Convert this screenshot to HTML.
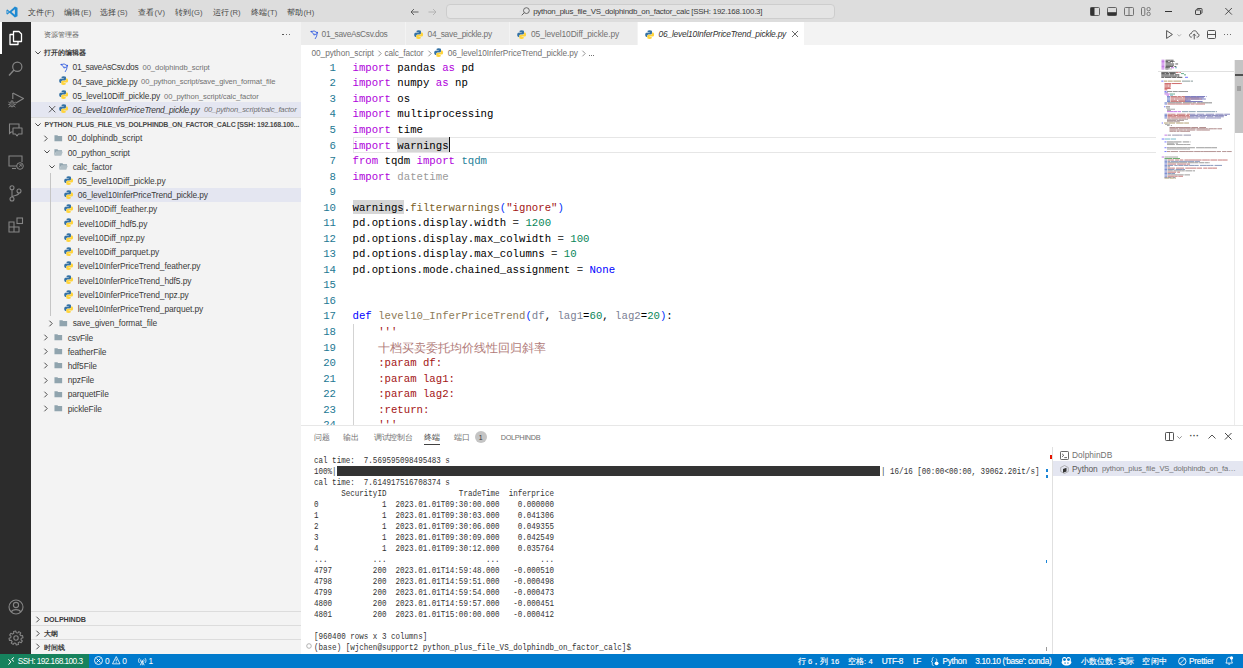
<!DOCTYPE html><html><head><meta charset="utf-8"><style>
*{box-sizing:border-box;margin:0;padding:0}
html,body{width:1243px;height:668px;overflow:hidden;background:#fff;font-family:"Liberation Sans",sans-serif;position:relative}
.a{position:absolute}
.t{position:absolute;white-space:pre;line-height:1}
.ui{font-size:8.4px;color:#333;letter-spacing:-0.1px}
.mono{font-family:"Liberation Mono",monospace}
svg{position:absolute;overflow:visible}
</style></head><body>
<div class="a" style="left:0px;top:0px;width:1243px;height:22px;background:#dddddd;"></div>
<div class="a" style="left:0px;top:22px;width:31px;height:632px;background:#2c2c2c;"></div>
<div class="a" style="left:31px;top:22px;width:270px;height:632px;background:#f3f3f3;"></div>
<div class="a" style="left:301px;top:22px;width:942px;height:23px;background:#f3f3f3;"></div>
<div class="a" style="left:301px;top:45px;width:942px;height:380px;background:#ffffff;"></div>
<div class="a" style="left:301px;top:425px;width:942px;height:229px;background:#ffffff;border-top:1px solid #e7e7e7"></div>
<div class="a" style="left:0px;top:654px;width:1243px;height:14px;background:#007acc;"></div>
<div class="a" style="left:0px;top:654px;width:89px;height:14px;background:#16825d;"></div>
<svg style="left:5.5px;top:5.5px" width="12" height="12" viewBox="0 0 100 100"><path d="M74 4 L96 14 V86 L74 96 L30 56 L12 70 L4 66 V34 L12 30 L30 44 Z M74 28 L46 50 L74 72 Z M12 40 V60 L22 50 Z" fill="#1f8ad2" fill-rule="evenodd"/></svg>
<div class="t" style="left:27.7px;top:7.6px;font-size:8.4px;height:9px;color:#3b3b3b">文件<span style="font-size:7.6px;letter-spacing:0.1px;margin-left:0.8px;color:#555">(F)</span></div>
<div class="t" style="left:64.2px;top:7.6px;font-size:8.4px;height:9px;color:#3b3b3b">编辑<span style="font-size:7.6px;letter-spacing:0.1px;margin-left:0.8px;color:#555">(E)</span></div>
<div class="t" style="left:100.4px;top:7.6px;font-size:8.4px;height:9px;color:#3b3b3b">选择<span style="font-size:7.6px;letter-spacing:0.1px;margin-left:0.8px;color:#555">(S)</span></div>
<div class="t" style="left:137.8px;top:7.6px;font-size:8.4px;height:9px;color:#3b3b3b">查看<span style="font-size:7.6px;letter-spacing:0.1px;margin-left:0.8px;color:#555">(V)</span></div>
<div class="t" style="left:174.5px;top:7.6px;font-size:8.4px;height:9px;color:#3b3b3b">转到<span style="font-size:7.6px;letter-spacing:0.1px;margin-left:0.8px;color:#555">(G)</span></div>
<div class="t" style="left:213.1px;top:7.6px;font-size:8.4px;height:9px;color:#3b3b3b">运行<span style="font-size:7.6px;letter-spacing:0.1px;margin-left:0.8px;color:#555">(R)</span></div>
<div class="t" style="left:250.5px;top:7.6px;font-size:8.4px;height:9px;color:#3b3b3b">终端<span style="font-size:7.6px;letter-spacing:0.1px;margin-left:0.8px;color:#555">(T)</span></div>
<div class="t" style="left:286.7px;top:7.6px;font-size:8.4px;height:9px;color:#3b3b3b">帮助<span style="font-size:7.6px;letter-spacing:0.1px;margin-left:0.8px;color:#555">(H)</span></div>
<svg style="left:410px;top:7.5px" width="9" height="8" viewBox="0 0 9 8"><path d="M8.5 4H1 M4 1 L1 4 L4 7" stroke="#555" stroke-width="0.9" fill="none"/></svg>
<svg style="left:428px;top:7.5px" width="9" height="8" viewBox="0 0 9 8"><path d="M0.5 4H8 M5 1 L8 4 L5 7" stroke="#b0b0b0" stroke-width="0.9" fill="none"/></svg>
<div class="a" style="left:445.5px;top:3.7px;width:389.5px;height:15.5px;background:#e4e4e4;border:1px solid #cdcdcd;border-radius:4px"></div>
<svg style="left:521px;top:7px" width="9" height="9" viewBox="0 0 9 9"><circle cx="5.4" cy="3.6" r="2.9" stroke="#555" stroke-width="0.85" fill="none"/><path d="M3.3 5.7 L0.7 8.3" stroke="#555" stroke-width="0.9"/></svg>
<div class="t" style="left:533.2px;top:8.25px;font-size:7.9px;height:7.9px;color:#3b3b3b;letter-spacing:-0.229px;">python_plus_file_VS_dolphindb_on_factor_calc [SSH: 192.168.100.3]</div>
<svg style="left:1090px;top:7px" width="10" height="9" viewBox="0 0 10 9"><rect x="0.5" y="0.5" width="9" height="8" rx="1" stroke="#555" stroke-width="0.9" fill="none"/><rect x="0.5" y="0.5" width="4" height="8" fill="#333"/></svg>
<svg style="left:1107px;top:7px" width="10" height="9" viewBox="0 0 10 9"><rect x="0.5" y="0.5" width="9" height="8" rx="1" stroke="#555" stroke-width="0.9" fill="none"/><rect x="0.5" y="5.2" width="9" height="3.3" fill="#333"/></svg>
<svg style="left:1124px;top:7px" width="10" height="9" viewBox="0 0 10 9"><rect x="0.5" y="0.5" width="9" height="8" rx="1" stroke="#666" stroke-width="0.9" fill="none"/><path d="M5 0.5V8.5" stroke="#666" stroke-width="0.9"/></svg>
<svg style="left:1141px;top:7px" width="10" height="9" viewBox="0 0 10 9"><rect x="0.5" y="0.5" width="3.3" height="8" rx="1" stroke="#666" stroke-width="0.9" fill="none"/><rect x="6" y="0.5" width="3.2" height="3.2" rx="1.3" stroke="#666" stroke-width="0.8" fill="none"/><rect x="6" y="5.3" width="3.2" height="3.2" rx="1.3" stroke="#666" stroke-width="0.8" fill="none"/></svg>
<div class="a" style="left:1165px;top:11px;width:7px;height:0.9px;background:#333;"></div>
<svg style="left:1194.7px;top:7.9px" width="7.5" height="7" viewBox="0 0 7.5 7"><rect x="0.5" y="2" width="5" height="4.5" rx="0.6" stroke="#333" stroke-width="0.9" fill="none"/><path d="M2 2 V1.2 Q2 0.5 2.7 0.5 H6.3 Q7 0.5 7 1.2 V4.6 Q7 5.3 6.3 5.3 H5.5" stroke="#333" stroke-width="0.9" fill="none"/></svg>
<svg style="left:1224.6px;top:7.9px" width="7.2" height="6.6" viewBox="0 0 7 7"><path d="M0 0L7 7M7 0L0 7" stroke="#333" stroke-width="0.9"/></svg>
<div class="a" style="left:0px;top:22px;width:2px;height:32px;background:#ffffff;"></div>
<svg style="left:8px;top:30px" width="15" height="16" viewBox="0 0 15 16"><path d="M5.5 1.5 H11 L13.5 4 V11.5 H5.5 Z" stroke="#fff" stroke-width="1.3" fill="none" stroke-linejoin="round"/><path d="M5.5 4.5 H2 V14.5 H10 V11.5" stroke="#fff" stroke-width="1.3" fill="none" stroke-linejoin="round"/></svg>
<svg style="left:8px;top:61px" width="15" height="16" viewBox="0 0 15 16"><circle cx="9.3" cy="5.7" r="4.6" stroke="#858585" stroke-width="1.2" fill="none"/><path d="M6 9 L1 14.5" stroke="#858585" stroke-width="1.4"/></svg>
<svg style="left:8px;top:92px" width="16" height="16" viewBox="0 0 16 16"><path d="M4.8 1 L15.5 6.6 L7.5 11.3" stroke="#858585" stroke-width="1.15" fill="none" stroke-linejoin="round"/><path d="M4.8 1 V7" stroke="#858585" stroke-width="1.15"/><ellipse cx="4" cy="12.3" rx="2.1" ry="2.6" stroke="#858585" stroke-width="0.95" fill="none"/><path d="M2.6 9.3 Q4 8.2 5.4 9.3" stroke="#858585" stroke-width="0.9" fill="none"/><path d="M1.9 10.8 L0.3 10 M1.9 12.5 H0.2 M2.1 14 L0.6 15.2 M6.1 10.8 L7.7 10 M6.1 12.5 H7.8 M5.9 14 L7.4 15.2 M4 10.3 V14.6" stroke="#858585" stroke-width="0.8" fill="none"/></svg>
<svg style="left:8px;top:123px" width="15" height="15" viewBox="0 0 15 15"><path d="M1 1 H11 V5 M5 9 H3 L1.5 10.5 V1" stroke="#858585" stroke-width="1.1" fill="none"/><path d="M5 5 H14 V11 H10.5 L9 12.8 L7.5 11 H5 Z" stroke="#858585" stroke-width="1.1" fill="none" stroke-linejoin="round"/></svg>
<svg style="left:8px;top:155px" width="16" height="15" viewBox="0 0 16 15"><path d="M9 11 H1 V1 H14 V7" stroke="#858585" stroke-width="1.1" fill="none"/><path d="M4 13.5 H8" stroke="#858585" stroke-width="1.1"/><circle cx="12" cy="11" r="3.3" stroke="#858585" stroke-width="1" fill="none"/><path d="M10.7 12.3 L13.3 9.7 M11.3 9.7H13.3V11.7" stroke="#858585" stroke-width="0.8" fill="none"/></svg>
<svg style="left:9px;top:185px" width="13" height="17" viewBox="0 0 13 17"><circle cx="3" cy="2.8" r="2" stroke="#858585" stroke-width="1.1" fill="none"/><circle cx="3" cy="14" r="2" stroke="#858585" stroke-width="1.1" fill="none"/><circle cx="10" cy="6" r="2" stroke="#858585" stroke-width="1.1" fill="none"/><path d="M3 4.8 V12 M10 8 C10 11 4 10 3.2 12" stroke="#858585" stroke-width="1.1" fill="none"/></svg>
<svg style="left:8px;top:217px" width="16" height="16" viewBox="0 0 16 16"><path d="M1 5 H6 V10 H11 V15 H1 Z M1 10 H6 V15" stroke="#858585" stroke-width="1.1" fill="none"/><rect x="9" y="1" width="5.5" height="5.5" stroke="#858585" stroke-width="1.1" fill="none"/></svg>
<svg style="left:8px;top:599px" width="16" height="16" viewBox="0 0 16 16"><circle cx="8" cy="8" r="7" stroke="#858585" stroke-width="1.1" fill="none"/><circle cx="8" cy="6" r="2.6" stroke="#858585" stroke-width="1.1" fill="none"/><path d="M3.3 13 C4.5 9.8 11.5 9.8 12.7 13" stroke="#858585" stroke-width="1.1" fill="none"/></svg>
<svg style="left:8px;top:630px" width="16" height="16" viewBox="0 0 16 16"><polygon points="14.56,5.56 15.00,7.75 13.30,8.19 12.97,9.85 14.37,10.91 13.13,12.77 11.61,11.88 10.20,12.82 10.44,14.56 8.25,15.00 7.81,13.30 6.15,12.97 5.09,14.37 3.23,13.13 4.12,11.61 3.18,10.20 1.44,10.44 1.00,8.25 2.70,7.81 3.03,6.15 1.63,5.09 2.87,3.23 4.39,4.12 5.80,3.18 5.56,1.44 7.75,1.00 8.19,2.70 9.85,3.03 10.91,1.63 12.77,2.87 11.88,4.39 12.82,5.80" stroke="#858585" stroke-width="1.1" fill="none" stroke-linejoin="round"/><circle cx="8" cy="8" r="2.2" stroke="#858585" stroke-width="1.1" fill="none"/></svg>
<div class="t" style="left:44.2px;top:31.20px;font-size:7.4px;height:7.4px;color:#616161;letter-spacing:-0.080px;">资源管理器</div>
<div class="a" style="left:282.4px;top:33.6px;width:1.35px;height:1.35px;background:#424242;border-radius:1px"></div>
<div class="a" style="left:285.54999999999995px;top:33.6px;width:1.35px;height:1.35px;background:#424242;border-radius:1px"></div>
<div class="a" style="left:288.7px;top:33.6px;width:1.35px;height:1.35px;background:#424242;border-radius:1px"></div>
<svg style="left:35px;top:51px" width="6" height="4" viewBox="0 0 6 4"><path d="M0.4 0.4 L3 3 L5.6 0.4" stroke="#424242" stroke-width="0.95" fill="none"/></svg>
<div class="t" style="left:44.2px;top:48.55px;font-size:7.3px;height:7.3px;color:#3b3b3b;letter-spacing:-0.080px;font-weight:bold;">打开的编辑器</div>
<div class="a" style="left:31px;top:102.1px;width:270px;height:14.6px;background:#e4e6f1;"></div>
<svg style="left:60.2px;top:61.900000000000006px" width="9" height="11" viewBox="0 0 9 11"><path d="M1.2 2.5 Q4 0.6 7.3 3.6 M1.2 2.5 L4.3 5.8 M7.3 3.6 Q7.2 7.6 5.3 9.7 M4.3 5.8 L6.5 5" stroke="#4169e1" stroke-width="0.95" fill="none" stroke-linecap="round"/><circle cx="1.3" cy="2.5" r="0.75" fill="#3b5fe0"/><circle cx="7.3" cy="3.6" r="0.8" fill="#3b5fe0"/><circle cx="4.1" cy="5.4" r="0.8" fill="#5b7de8"/></svg>
<div class="t" style="left:72.6px;top:63.30px;font-size:8.4px;height:8.4px;color:#3b3b3b;letter-spacing:-0.338px;">01_saveAsCsv.dos</div>
<div class="t" style="left:142.5px;top:64.00px;font-size:7.6px;height:7.6px;color:#717171;letter-spacing:-0.044px;">00_dolphindb_script</div>
<svg style="left:58.7px;top:76.1px" width="9.3" height="9.3" viewBox="0 0 10 10"><path d="M5 0.3 C2.6 0.3 2.8 1.3 2.8 1.3 V2.5 H5.1 V2.9 H1.8 C1.8 2.9 0.2 2.7 0.2 5.1 C0.2 7.5 1.6 7.4 1.6 7.4 H2.5 V6.2 C2.5 6.2 2.4 4.8 3.9 4.8 H6.2 C6.2 4.8 7.5 4.8 7.5 3.5 V1.4 C7.5 1.4 7.7 0.3 5 0.3 Z" fill="#3572a5"/><path d="M5 9.7 C7.4 9.7 7.2 8.7 7.2 8.7 V7.5 H4.9 V7.1 H8.2 C8.2 7.1 9.8 7.3 9.8 4.9 C9.8 2.5 8.4 2.6 8.4 2.6 H7.5 V3.8 C7.5 3.8 7.6 5.2 6.1 5.2 H3.8 C3.8 5.2 2.5 5.2 2.5 6.5 V8.6 C2.5 8.6 2.3 9.7 5 9.7 Z" fill="#ffd43b"/></svg>
<div class="t" style="left:72.6px;top:77.50px;font-size:8.4px;height:8.4px;color:#3b3b3b;letter-spacing:-0.236px;">04_save_pickle.py</div>
<div class="t" style="left:141.1px;top:78.20px;font-size:7.6px;height:7.6px;color:#717171;letter-spacing:-0.096px;">00_python_script/save_given_format_file</div>
<svg style="left:58.7px;top:90.4px" width="9.3" height="9.3" viewBox="0 0 10 10"><path d="M5 0.3 C2.6 0.3 2.8 1.3 2.8 1.3 V2.5 H5.1 V2.9 H1.8 C1.8 2.9 0.2 2.7 0.2 5.1 C0.2 7.5 1.6 7.4 1.6 7.4 H2.5 V6.2 C2.5 6.2 2.4 4.8 3.9 4.8 H6.2 C6.2 4.8 7.5 4.8 7.5 3.5 V1.4 C7.5 1.4 7.7 0.3 5 0.3 Z" fill="#3572a5"/><path d="M5 9.7 C7.4 9.7 7.2 8.7 7.2 8.7 V7.5 H4.9 V7.1 H8.2 C8.2 7.1 9.8 7.3 9.8 4.9 C9.8 2.5 8.4 2.6 8.4 2.6 H7.5 V3.8 C7.5 3.8 7.6 5.2 6.1 5.2 H3.8 C3.8 5.2 2.5 5.2 2.5 6.5 V8.6 C2.5 8.6 2.3 9.7 5 9.7 Z" fill="#ffd43b"/></svg>
<div class="t" style="left:72.6px;top:91.80px;font-size:8.4px;height:8.4px;color:#3b3b3b;letter-spacing:-0.108px;">05_level10Diff_pickle.py</div>
<div class="t" style="left:164.0px;top:92.50px;font-size:7.6px;height:7.6px;color:#717171;letter-spacing:-0.073px;">00_python_script/calc_factor</div>
<svg style="left:58.7px;top:104.3px" width="9.3" height="9.3" viewBox="0 0 10 10"><path d="M5 0.3 C2.6 0.3 2.8 1.3 2.8 1.3 V2.5 H5.1 V2.9 H1.8 C1.8 2.9 0.2 2.7 0.2 5.1 C0.2 7.5 1.6 7.4 1.6 7.4 H2.5 V6.2 C2.5 6.2 2.4 4.8 3.9 4.8 H6.2 C6.2 4.8 7.5 4.8 7.5 3.5 V1.4 C7.5 1.4 7.7 0.3 5 0.3 Z" fill="#3572a5"/><path d="M5 9.7 C7.4 9.7 7.2 8.7 7.2 8.7 V7.5 H4.9 V7.1 H8.2 C8.2 7.1 9.8 7.3 9.8 4.9 C9.8 2.5 8.4 2.6 8.4 2.6 H7.5 V3.8 C7.5 3.8 7.6 5.2 6.1 5.2 H3.8 C3.8 5.2 2.5 5.2 2.5 6.5 V8.6 C2.5 8.6 2.3 9.7 5 9.7 Z" fill="#ffd43b"/></svg>
<div class="t" style="left:72.6px;top:105.70px;font-size:8.4px;height:8.4px;color:#3b3b3b;letter-spacing:-0.228px;font-style:italic;">06_level10InferPriceTrend_pickle.py</div>
<div class="t" style="left:203.9px;top:106.40px;font-size:7.6px;height:7.6px;color:#717171;letter-spacing:-0.144px;font-style:italic;">00_python_script/calc_factor</div>
<svg style="left:48.7px;top:106.2px" width="6.3" height="6.3" viewBox="0 0 6 6"><path d="M0 0L6 6M6 0L0 6" stroke="#424242" stroke-width="0.8"/></svg>
<div class="a" style="left:31px;top:116.5px;width:270px;height:0.8px;background:#dcdcdc;"></div>
<svg style="left:35px;top:123px" width="6" height="4" viewBox="0 0 6 4"><path d="M0.4 0.4 L3 3 L5.6 0.4" stroke="#424242" stroke-width="0.95" fill="none"/></svg>
<div class="t" style="left:44.5px;top:121.00px;font-size:7.0px;height:7.0px;color:#4a4a4a;letter-spacing:-0.200px;font-weight:bold;">PYTHON_PLUS_FILE_VS_DOLPHINDB_ON_FACTOR_CALC [SSH: 192.168.100...</div>
<svg style="left:44.3px;top:134.70px" width="4" height="7" viewBox="0 0 4 6.4"><path d="M0.4 0.4 L3.2 3.2 L0.4 6" stroke="#424242" stroke-width="0.95" fill="none"/></svg>
<svg style="left:54.0px;top:134.8px" width="8.6" height="6.4" viewBox="0 0 10 8"><path d="M0.2 0.2 H3.8 L4.8 1.2 H9.8 V7.8 H0.2 Z" fill="#90a4ae"/></svg>
<div class="t" style="left:67.7px;top:134.30px;font-size:8.4px;height:8.4px;color:#3b3b3b;letter-spacing:-0.021px;">00_dolphindb_script</div>
<svg style="left:43.5px;top:150.33px" width="6" height="4" viewBox="0 0 6 4"><path d="M0.4 0.4 L3 3 L5.6 0.4" stroke="#424242" stroke-width="0.95" fill="none"/></svg>
<svg style="left:54.0px;top:149.03px" width="9" height="7" viewBox="0 0 10 8"><path d="M0.3 0.3 H3.8 L4.8 1.3 H9 V3 H2.2 L0.3 7.7 Z" fill="#90a4ae"/><path d="M2.2 3.2 H9.9 L8.2 7.7 H0.4 Z" fill="#b0bec5"/></svg>
<div class="t" style="left:67.7px;top:148.53px;font-size:8.4px;height:8.4px;color:#3b3b3b;letter-spacing:-0.105px;">00_python_script</div>
<svg style="left:48.5px;top:164.56px" width="6" height="4" viewBox="0 0 6 4"><path d="M0.4 0.4 L3 3 L5.6 0.4" stroke="#424242" stroke-width="0.95" fill="none"/></svg>
<svg style="left:59.0px;top:163.26000000000002px" width="9" height="7" viewBox="0 0 10 8"><path d="M0.3 0.3 H3.8 L4.8 1.3 H9 V3 H2.2 L0.3 7.7 Z" fill="#90a4ae"/><path d="M2.2 3.2 H9.9 L8.2 7.7 H0.4 Z" fill="#b0bec5"/></svg>
<div class="t" style="left:72.7px;top:162.76px;font-size:8.4px;height:8.4px;color:#3b3b3b;letter-spacing:-0.102px;">calc_factor</div>
<svg style="left:63.8px;top:175.69px" width="9.3" height="9.3" viewBox="0 0 10 10"><path d="M5 0.3 C2.6 0.3 2.8 1.3 2.8 1.3 V2.5 H5.1 V2.9 H1.8 C1.8 2.9 0.2 2.7 0.2 5.1 C0.2 7.5 1.6 7.4 1.6 7.4 H2.5 V6.2 C2.5 6.2 2.4 4.8 3.9 4.8 H6.2 C6.2 4.8 7.5 4.8 7.5 3.5 V1.4 C7.5 1.4 7.7 0.3 5 0.3 Z" fill="#3572a5"/><path d="M5 9.7 C7.4 9.7 7.2 8.7 7.2 8.7 V7.5 H4.9 V7.1 H8.2 C8.2 7.1 9.8 7.3 9.8 4.9 C9.8 2.5 8.4 2.6 8.4 2.6 H7.5 V3.8 C7.5 3.8 7.6 5.2 6.1 5.2 H3.8 C3.8 5.2 2.5 5.2 2.5 6.5 V8.6 C2.5 8.6 2.3 9.7 5 9.7 Z" fill="#ffd43b"/></svg>
<div class="t" style="left:77.7px;top:176.99px;font-size:8.4px;height:8.4px;color:#3b3b3b;letter-spacing:-0.099px;">05_level10Diff_pickle.py</div>
<div class="a" style="left:31px;top:188.2px;width:270px;height:13.8px;background:#e4e6f1;"></div>
<svg style="left:63.8px;top:189.92px" width="9.3" height="9.3" viewBox="0 0 10 10"><path d="M5 0.3 C2.6 0.3 2.8 1.3 2.8 1.3 V2.5 H5.1 V2.9 H1.8 C1.8 2.9 0.2 2.7 0.2 5.1 C0.2 7.5 1.6 7.4 1.6 7.4 H2.5 V6.2 C2.5 6.2 2.4 4.8 3.9 4.8 H6.2 C6.2 4.8 7.5 4.8 7.5 3.5 V1.4 C7.5 1.4 7.7 0.3 5 0.3 Z" fill="#3572a5"/><path d="M5 9.7 C7.4 9.7 7.2 8.7 7.2 8.7 V7.5 H4.9 V7.1 H8.2 C8.2 7.1 9.8 7.3 9.8 4.9 C9.8 2.5 8.4 2.6 8.4 2.6 H7.5 V3.8 C7.5 3.8 7.6 5.2 6.1 5.2 H3.8 C3.8 5.2 2.5 5.2 2.5 6.5 V8.6 C2.5 8.6 2.3 9.7 5 9.7 Z" fill="#ffd43b"/></svg>
<div class="t" style="left:77.7px;top:191.22px;font-size:8.4px;height:8.4px;color:#3b3b3b;letter-spacing:-0.145px;">06_level10InferPriceTrend_pickle.py</div>
<svg style="left:63.8px;top:204.15px" width="9.3" height="9.3" viewBox="0 0 10 10"><path d="M5 0.3 C2.6 0.3 2.8 1.3 2.8 1.3 V2.5 H5.1 V2.9 H1.8 C1.8 2.9 0.2 2.7 0.2 5.1 C0.2 7.5 1.6 7.4 1.6 7.4 H2.5 V6.2 C2.5 6.2 2.4 4.8 3.9 4.8 H6.2 C6.2 4.8 7.5 4.8 7.5 3.5 V1.4 C7.5 1.4 7.7 0.3 5 0.3 Z" fill="#3572a5"/><path d="M5 9.7 C7.4 9.7 7.2 8.7 7.2 8.7 V7.5 H4.9 V7.1 H8.2 C8.2 7.1 9.8 7.3 9.8 4.9 C9.8 2.5 8.4 2.6 8.4 2.6 H7.5 V3.8 C7.5 3.8 7.6 5.2 6.1 5.2 H3.8 C3.8 5.2 2.5 5.2 2.5 6.5 V8.6 C2.5 8.6 2.3 9.7 5 9.7 Z" fill="#ffd43b"/></svg>
<div class="t" style="left:77.7px;top:205.45px;font-size:8.4px;height:8.4px;color:#3b3b3b;letter-spacing:-0.039px;">level10Diff_feather.py</div>
<svg style="left:63.8px;top:218.38px" width="9.3" height="9.3" viewBox="0 0 10 10"><path d="M5 0.3 C2.6 0.3 2.8 1.3 2.8 1.3 V2.5 H5.1 V2.9 H1.8 C1.8 2.9 0.2 2.7 0.2 5.1 C0.2 7.5 1.6 7.4 1.6 7.4 H2.5 V6.2 C2.5 6.2 2.4 4.8 3.9 4.8 H6.2 C6.2 4.8 7.5 4.8 7.5 3.5 V1.4 C7.5 1.4 7.7 0.3 5 0.3 Z" fill="#3572a5"/><path d="M5 9.7 C7.4 9.7 7.2 8.7 7.2 8.7 V7.5 H4.9 V7.1 H8.2 C8.2 7.1 9.8 7.3 9.8 4.9 C9.8 2.5 8.4 2.6 8.4 2.6 H7.5 V3.8 C7.5 3.8 7.6 5.2 6.1 5.2 H3.8 C3.8 5.2 2.5 5.2 2.5 6.5 V8.6 C2.5 8.6 2.3 9.7 5 9.7 Z" fill="#ffd43b"/></svg>
<div class="t" style="left:77.7px;top:219.68px;font-size:8.4px;height:8.4px;color:#3b3b3b;letter-spacing:-0.080px;">level10Diff_hdf5.py</div>
<svg style="left:63.8px;top:232.60999999999999px" width="9.3" height="9.3" viewBox="0 0 10 10"><path d="M5 0.3 C2.6 0.3 2.8 1.3 2.8 1.3 V2.5 H5.1 V2.9 H1.8 C1.8 2.9 0.2 2.7 0.2 5.1 C0.2 7.5 1.6 7.4 1.6 7.4 H2.5 V6.2 C2.5 6.2 2.4 4.8 3.9 4.8 H6.2 C6.2 4.8 7.5 4.8 7.5 3.5 V1.4 C7.5 1.4 7.7 0.3 5 0.3 Z" fill="#3572a5"/><path d="M5 9.7 C7.4 9.7 7.2 8.7 7.2 8.7 V7.5 H4.9 V7.1 H8.2 C8.2 7.1 9.8 7.3 9.8 4.9 C9.8 2.5 8.4 2.6 8.4 2.6 H7.5 V3.8 C7.5 3.8 7.6 5.2 6.1 5.2 H3.8 C3.8 5.2 2.5 5.2 2.5 6.5 V8.6 C2.5 8.6 2.3 9.7 5 9.7 Z" fill="#ffd43b"/></svg>
<div class="t" style="left:77.7px;top:233.91px;font-size:8.4px;height:8.4px;color:#3b3b3b;letter-spacing:-0.080px;">level10Diff_npz.py</div>
<svg style="left:63.8px;top:246.84px" width="9.3" height="9.3" viewBox="0 0 10 10"><path d="M5 0.3 C2.6 0.3 2.8 1.3 2.8 1.3 V2.5 H5.1 V2.9 H1.8 C1.8 2.9 0.2 2.7 0.2 5.1 C0.2 7.5 1.6 7.4 1.6 7.4 H2.5 V6.2 C2.5 6.2 2.4 4.8 3.9 4.8 H6.2 C6.2 4.8 7.5 4.8 7.5 3.5 V1.4 C7.5 1.4 7.7 0.3 5 0.3 Z" fill="#3572a5"/><path d="M5 9.7 C7.4 9.7 7.2 8.7 7.2 8.7 V7.5 H4.9 V7.1 H8.2 C8.2 7.1 9.8 7.3 9.8 4.9 C9.8 2.5 8.4 2.6 8.4 2.6 H7.5 V3.8 C7.5 3.8 7.6 5.2 6.1 5.2 H3.8 C3.8 5.2 2.5 5.2 2.5 6.5 V8.6 C2.5 8.6 2.3 9.7 5 9.7 Z" fill="#ffd43b"/></svg>
<div class="t" style="left:77.7px;top:248.14px;font-size:8.4px;height:8.4px;color:#3b3b3b;letter-spacing:-0.080px;">level10Diff_parquet.py</div>
<svg style="left:63.8px;top:261.07000000000005px" width="9.3" height="9.3" viewBox="0 0 10 10"><path d="M5 0.3 C2.6 0.3 2.8 1.3 2.8 1.3 V2.5 H5.1 V2.9 H1.8 C1.8 2.9 0.2 2.7 0.2 5.1 C0.2 7.5 1.6 7.4 1.6 7.4 H2.5 V6.2 C2.5 6.2 2.4 4.8 3.9 4.8 H6.2 C6.2 4.8 7.5 4.8 7.5 3.5 V1.4 C7.5 1.4 7.7 0.3 5 0.3 Z" fill="#3572a5"/><path d="M5 9.7 C7.4 9.7 7.2 8.7 7.2 8.7 V7.5 H4.9 V7.1 H8.2 C8.2 7.1 9.8 7.3 9.8 4.9 C9.8 2.5 8.4 2.6 8.4 2.6 H7.5 V3.8 C7.5 3.8 7.6 5.2 6.1 5.2 H3.8 C3.8 5.2 2.5 5.2 2.5 6.5 V8.6 C2.5 8.6 2.3 9.7 5 9.7 Z" fill="#ffd43b"/></svg>
<div class="t" style="left:77.7px;top:262.37px;font-size:8.4px;height:8.4px;color:#3b3b3b;letter-spacing:-0.080px;">level10InferPriceTrend_feather.py</div>
<svg style="left:63.8px;top:275.30000000000007px" width="9.3" height="9.3" viewBox="0 0 10 10"><path d="M5 0.3 C2.6 0.3 2.8 1.3 2.8 1.3 V2.5 H5.1 V2.9 H1.8 C1.8 2.9 0.2 2.7 0.2 5.1 C0.2 7.5 1.6 7.4 1.6 7.4 H2.5 V6.2 C2.5 6.2 2.4 4.8 3.9 4.8 H6.2 C6.2 4.8 7.5 4.8 7.5 3.5 V1.4 C7.5 1.4 7.7 0.3 5 0.3 Z" fill="#3572a5"/><path d="M5 9.7 C7.4 9.7 7.2 8.7 7.2 8.7 V7.5 H4.9 V7.1 H8.2 C8.2 7.1 9.8 7.3 9.8 4.9 C9.8 2.5 8.4 2.6 8.4 2.6 H7.5 V3.8 C7.5 3.8 7.6 5.2 6.1 5.2 H3.8 C3.8 5.2 2.5 5.2 2.5 6.5 V8.6 C2.5 8.6 2.3 9.7 5 9.7 Z" fill="#ffd43b"/></svg>
<div class="t" style="left:77.7px;top:276.60px;font-size:8.4px;height:8.4px;color:#3b3b3b;letter-spacing:-0.080px;">level10InferPriceTrend_hdf5.py</div>
<svg style="left:63.8px;top:289.53000000000003px" width="9.3" height="9.3" viewBox="0 0 10 10"><path d="M5 0.3 C2.6 0.3 2.8 1.3 2.8 1.3 V2.5 H5.1 V2.9 H1.8 C1.8 2.9 0.2 2.7 0.2 5.1 C0.2 7.5 1.6 7.4 1.6 7.4 H2.5 V6.2 C2.5 6.2 2.4 4.8 3.9 4.8 H6.2 C6.2 4.8 7.5 4.8 7.5 3.5 V1.4 C7.5 1.4 7.7 0.3 5 0.3 Z" fill="#3572a5"/><path d="M5 9.7 C7.4 9.7 7.2 8.7 7.2 8.7 V7.5 H4.9 V7.1 H8.2 C8.2 7.1 9.8 7.3 9.8 4.9 C9.8 2.5 8.4 2.6 8.4 2.6 H7.5 V3.8 C7.5 3.8 7.6 5.2 6.1 5.2 H3.8 C3.8 5.2 2.5 5.2 2.5 6.5 V8.6 C2.5 8.6 2.3 9.7 5 9.7 Z" fill="#ffd43b"/></svg>
<div class="t" style="left:77.7px;top:290.83px;font-size:8.4px;height:8.4px;color:#3b3b3b;letter-spacing:-0.080px;">level10InferPriceTrend_npz.py</div>
<svg style="left:63.8px;top:303.76px" width="9.3" height="9.3" viewBox="0 0 10 10"><path d="M5 0.3 C2.6 0.3 2.8 1.3 2.8 1.3 V2.5 H5.1 V2.9 H1.8 C1.8 2.9 0.2 2.7 0.2 5.1 C0.2 7.5 1.6 7.4 1.6 7.4 H2.5 V6.2 C2.5 6.2 2.4 4.8 3.9 4.8 H6.2 C6.2 4.8 7.5 4.8 7.5 3.5 V1.4 C7.5 1.4 7.7 0.3 5 0.3 Z" fill="#3572a5"/><path d="M5 9.7 C7.4 9.7 7.2 8.7 7.2 8.7 V7.5 H4.9 V7.1 H8.2 C8.2 7.1 9.8 7.3 9.8 4.9 C9.8 2.5 8.4 2.6 8.4 2.6 H7.5 V3.8 C7.5 3.8 7.6 5.2 6.1 5.2 H3.8 C3.8 5.2 2.5 5.2 2.5 6.5 V8.6 C2.5 8.6 2.3 9.7 5 9.7 Z" fill="#ffd43b"/></svg>
<div class="t" style="left:77.7px;top:305.06px;font-size:8.4px;height:8.4px;color:#3b3b3b;letter-spacing:-0.080px;">level10InferPriceTrend_parquet.py</div>
<svg style="left:49.3px;top:319.69px" width="4" height="7" viewBox="0 0 4 6.4"><path d="M0.4 0.4 L3.2 3.2 L0.4 6" stroke="#424242" stroke-width="0.95" fill="none"/></svg>
<svg style="left:59.0px;top:319.78999999999996px" width="8.6" height="6.4" viewBox="0 0 10 8"><path d="M0.2 0.2 H3.8 L4.8 1.2 H9.8 V7.8 H0.2 Z" fill="#90a4ae"/></svg>
<div class="t" style="left:72.7px;top:319.29px;font-size:8.4px;height:8.4px;color:#3b3b3b;letter-spacing:-0.080px;">save_given_format_file</div>
<svg style="left:44.3px;top:333.92px" width="4" height="7" viewBox="0 0 4 6.4"><path d="M0.4 0.4 L3.2 3.2 L0.4 6" stroke="#424242" stroke-width="0.95" fill="none"/></svg>
<svg style="left:54.0px;top:334.02px" width="8.6" height="6.4" viewBox="0 0 10 8"><path d="M0.2 0.2 H3.8 L4.8 1.2 H9.8 V7.8 H0.2 Z" fill="#90a4ae"/></svg>
<div class="t" style="left:67.7px;top:333.52px;font-size:8.4px;height:8.4px;color:#3b3b3b;letter-spacing:-0.080px;">csvFile</div>
<svg style="left:44.3px;top:348.15px" width="4" height="7" viewBox="0 0 4 6.4"><path d="M0.4 0.4 L3.2 3.2 L0.4 6" stroke="#424242" stroke-width="0.95" fill="none"/></svg>
<svg style="left:54.0px;top:348.25px" width="8.6" height="6.4" viewBox="0 0 10 8"><path d="M0.2 0.2 H3.8 L4.8 1.2 H9.8 V7.8 H0.2 Z" fill="#90a4ae"/></svg>
<div class="t" style="left:67.7px;top:347.75px;font-size:8.4px;height:8.4px;color:#3b3b3b;letter-spacing:-0.080px;">featherFile</div>
<svg style="left:44.3px;top:362.38px" width="4" height="7" viewBox="0 0 4 6.4"><path d="M0.4 0.4 L3.2 3.2 L0.4 6" stroke="#424242" stroke-width="0.95" fill="none"/></svg>
<svg style="left:54.0px;top:362.48px" width="8.6" height="6.4" viewBox="0 0 10 8"><path d="M0.2 0.2 H3.8 L4.8 1.2 H9.8 V7.8 H0.2 Z" fill="#90a4ae"/></svg>
<div class="t" style="left:67.7px;top:361.98px;font-size:8.4px;height:8.4px;color:#3b3b3b;letter-spacing:-0.080px;">hdf5File</div>
<svg style="left:44.3px;top:376.61px" width="4" height="7" viewBox="0 0 4 6.4"><path d="M0.4 0.4 L3.2 3.2 L0.4 6" stroke="#424242" stroke-width="0.95" fill="none"/></svg>
<svg style="left:54.0px;top:376.71px" width="8.6" height="6.4" viewBox="0 0 10 8"><path d="M0.2 0.2 H3.8 L4.8 1.2 H9.8 V7.8 H0.2 Z" fill="#90a4ae"/></svg>
<div class="t" style="left:67.7px;top:376.21px;font-size:8.4px;height:8.4px;color:#3b3b3b;letter-spacing:-0.080px;">npzFile</div>
<svg style="left:44.3px;top:390.84px" width="4" height="7" viewBox="0 0 4 6.4"><path d="M0.4 0.4 L3.2 3.2 L0.4 6" stroke="#424242" stroke-width="0.95" fill="none"/></svg>
<svg style="left:54.0px;top:390.93999999999994px" width="8.6" height="6.4" viewBox="0 0 10 8"><path d="M0.2 0.2 H3.8 L4.8 1.2 H9.8 V7.8 H0.2 Z" fill="#90a4ae"/></svg>
<div class="t" style="left:67.7px;top:390.44px;font-size:8.4px;height:8.4px;color:#3b3b3b;letter-spacing:-0.080px;">parquetFile</div>
<svg style="left:44.3px;top:405.07px" width="4" height="7" viewBox="0 0 4 6.4"><path d="M0.4 0.4 L3.2 3.2 L0.4 6" stroke="#424242" stroke-width="0.95" fill="none"/></svg>
<svg style="left:54.0px;top:405.16999999999996px" width="8.6" height="6.4" viewBox="0 0 10 8"><path d="M0.2 0.2 H3.8 L4.8 1.2 H9.8 V7.8 H0.2 Z" fill="#90a4ae"/></svg>
<div class="t" style="left:67.7px;top:404.67px;font-size:8.4px;height:8.4px;color:#3b3b3b;letter-spacing:-0.080px;">pickleFile</div>
<div class="a" style="left:49.5px;top:173.4px;width:0.7px;height:143px;background:#c5c5c5;"></div>
<div class="a" style="left:31px;top:611.3px;width:270px;height:0.8px;background:#dcdcdc;"></div>
<svg style="left:36.3px;top:615.6px" width="4" height="7" viewBox="0 0 4 6.4"><path d="M0.4 0.4 L3.2 3.2 L0.4 6" stroke="#424242" stroke-width="0.95" fill="none"/></svg>
<div class="t" style="left:44px;top:616.00px;font-size:7.2px;height:7.2px;color:#3b3b3b;letter-spacing:-0.089px;font-weight:bold;">DOLPHINDB</div>
<div class="a" style="left:31px;top:625.3px;width:270px;height:0.8px;background:#dcdcdc;"></div>
<svg style="left:36.3px;top:629.6px" width="4" height="7" viewBox="0 0 4 6.4"><path d="M0.4 0.4 L3.2 3.2 L0.4 6" stroke="#424242" stroke-width="0.95" fill="none"/></svg>
<div class="t" style="left:44px;top:629.95px;font-size:7.3px;height:7.3px;color:#3b3b3b;letter-spacing:-0.080px;font-weight:bold;">大纲</div>
<div class="a" style="left:31px;top:639.1px;width:270px;height:0.8px;background:#dcdcdc;"></div>
<svg style="left:36.3px;top:643.4px" width="4" height="7" viewBox="0 0 4 6.4"><path d="M0.4 0.4 L3.2 3.2 L0.4 6" stroke="#424242" stroke-width="0.95" fill="none"/></svg>
<div class="t" style="left:44px;top:643.75px;font-size:7.3px;height:7.3px;color:#3b3b3b;letter-spacing:-0.080px;font-weight:bold;">时间线</div>
<div class="a" style="left:301px;top:22px;width:104.5px;height:23px;background:#ececec;border-right:1px solid #f3f3f3"></div>
<svg style="left:309.6px;top:28.8px" width="9" height="11" viewBox="0 0 9 11"><path d="M1.2 2.5 Q4 0.6 7.3 3.6 M1.2 2.5 L4.3 5.8 M7.3 3.6 Q7.2 7.6 5.3 9.7 M4.3 5.8 L6.5 5" stroke="#4169e1" stroke-width="0.95" fill="none" stroke-linecap="round"/><circle cx="1.3" cy="2.5" r="0.75" fill="#3b5fe0"/><circle cx="7.3" cy="3.6" r="0.8" fill="#3b5fe0"/><circle cx="4.1" cy="5.4" r="0.8" fill="#5b7de8"/></svg>
<div class="t" style="left:321.6px;top:30.20px;font-size:8.4px;height:8.4px;color:#717171;letter-spacing:-0.325px;">01_saveAsCsv.dos</div>
<div class="a" style="left:405.5px;top:22px;width:104.5px;height:23px;background:#ececec;border-right:1px solid #f3f3f3"></div>
<svg style="left:413.8px;top:29.8px" width="9.3" height="9.3" viewBox="0 0 10 10"><path d="M5 0.3 C2.6 0.3 2.8 1.3 2.8 1.3 V2.5 H5.1 V2.9 H1.8 C1.8 2.9 0.2 2.7 0.2 5.1 C0.2 7.5 1.6 7.4 1.6 7.4 H2.5 V6.2 C2.5 6.2 2.4 4.8 3.9 4.8 H6.2 C6.2 4.8 7.5 4.8 7.5 3.5 V1.4 C7.5 1.4 7.7 0.3 5 0.3 Z" fill="#3572a5"/><path d="M5 9.7 C7.4 9.7 7.2 8.7 7.2 8.7 V7.5 H4.9 V7.1 H8.2 C8.2 7.1 9.8 7.3 9.8 4.9 C9.8 2.5 8.4 2.6 8.4 2.6 H7.5 V3.8 C7.5 3.8 7.6 5.2 6.1 5.2 H3.8 C3.8 5.2 2.5 5.2 2.5 6.5 V8.6 C2.5 8.6 2.3 9.7 5 9.7 Z" fill="#ffd43b"/></svg>
<div class="t" style="left:427.5px;top:30.20px;font-size:8.4px;height:8.4px;color:#717171;letter-spacing:-0.271px;">04_save_pickle.py</div>
<div class="a" style="left:510px;top:22px;width:127.79999999999995px;height:23px;background:#ececec;border-right:1px solid #f3f3f3"></div>
<svg style="left:517.3px;top:29.8px" width="9.3" height="9.3" viewBox="0 0 10 10"><path d="M5 0.3 C2.6 0.3 2.8 1.3 2.8 1.3 V2.5 H5.1 V2.9 H1.8 C1.8 2.9 0.2 2.7 0.2 5.1 C0.2 7.5 1.6 7.4 1.6 7.4 H2.5 V6.2 C2.5 6.2 2.4 4.8 3.9 4.8 H6.2 C6.2 4.8 7.5 4.8 7.5 3.5 V1.4 C7.5 1.4 7.7 0.3 5 0.3 Z" fill="#3572a5"/><path d="M5 9.7 C7.4 9.7 7.2 8.7 7.2 8.7 V7.5 H4.9 V7.1 H8.2 C8.2 7.1 9.8 7.3 9.8 4.9 C9.8 2.5 8.4 2.6 8.4 2.6 H7.5 V3.8 C7.5 3.8 7.6 5.2 6.1 5.2 H3.8 C3.8 5.2 2.5 5.2 2.5 6.5 V8.6 C2.5 8.6 2.3 9.7 5 9.7 Z" fill="#ffd43b"/></svg>
<div class="t" style="left:531px;top:30.20px;font-size:8.4px;height:8.4px;color:#717171;letter-spacing:-0.087px;">05_level10Diff_pickle.py</div>
<div class="a" style="left:637.8px;top:22px;width:166.2px;height:23px;background:#ffffff;"></div>
<svg style="left:644.9px;top:29.8px" width="9.3" height="9.3" viewBox="0 0 10 10"><path d="M5 0.3 C2.6 0.3 2.8 1.3 2.8 1.3 V2.5 H5.1 V2.9 H1.8 C1.8 2.9 0.2 2.7 0.2 5.1 C0.2 7.5 1.6 7.4 1.6 7.4 H2.5 V6.2 C2.5 6.2 2.4 4.8 3.9 4.8 H6.2 C6.2 4.8 7.5 4.8 7.5 3.5 V1.4 C7.5 1.4 7.7 0.3 5 0.3 Z" fill="#3572a5"/><path d="M5 9.7 C7.4 9.7 7.2 8.7 7.2 8.7 V7.5 H4.9 V7.1 H8.2 C8.2 7.1 9.8 7.3 9.8 4.9 C9.8 2.5 8.4 2.6 8.4 2.6 H7.5 V3.8 C7.5 3.8 7.6 5.2 6.1 5.2 H3.8 C3.8 5.2 2.5 5.2 2.5 6.5 V8.6 C2.5 8.6 2.3 9.7 5 9.7 Z" fill="#ffd43b"/></svg>
<div class="t" style="left:658.6px;top:30.20px;font-size:8.4px;height:8.4px;color:#333333;letter-spacing:-0.211px;font-style:italic;">06_level10InferPriceTrend_pickle.py</div>
<svg style="left:791.8px;top:30.8px" width="6" height="6" viewBox="0 0 6 6"><path d="M0 0L6 6M6 0L0 6" stroke="#424242" stroke-width="0.8"/></svg>
<svg style="left:1165.8px;top:30px" width="7" height="9" viewBox="0 0 7 9"><path d="M0.6 0.6 L6.4 4.5 L0.6 8.4 Z" stroke="#424242" stroke-width="0.9" fill="none" stroke-linejoin="round"/></svg>
<svg style="left:1177px;top:33.5px" width="4.5" height="3" viewBox="0 0 4 3"><path d="M0.2 0.3 L2 2.2 L3.8 0.3" stroke="#888" stroke-width="0.6" fill="none"/></svg>
<svg style="left:1189.3px;top:30px" width="10.5" height="9.5" viewBox="0 0 11 10"><path d="M3 7.5 H2.5 C1 7.5 0.5 6.5 0.5 5.5 C0.5 4.4 1.4 3.6 2.5 3.7 C2.9 1.8 4.2 0.8 5.7 0.8 C7.5 0.8 8.6 2.2 8.7 3.7 C9.8 3.7 10.5 4.5 10.5 5.6 C10.5 6.7 9.7 7.5 8.6 7.5 H8" stroke="#424242" stroke-width="0.9" fill="none"/><path d="M5.5 9.8 V4.5 M3.8 6 L5.5 4.3 L7.2 6" stroke="#424242" stroke-width="0.9" fill="none"/></svg>
<svg style="left:1207px;top:29.8px" width="9" height="9" viewBox="0 0 9 9"><rect x="0.5" y="0.5" width="8" height="8" rx="1" stroke="#424242" stroke-width="0.9" fill="none"/><path d="M0.5 4.5 H8.5" stroke="#424242" stroke-width="0.9"/></svg>
<div class="a" style="left:1223.8px;top:33.7px;width:1.3px;height:1.3px;background:#424242;border-radius:1px"></div>
<div class="a" style="left:1227.0px;top:33.7px;width:1.3px;height:1.3px;background:#424242;border-radius:1px"></div>
<div class="a" style="left:1230.2px;top:33.7px;width:1.3px;height:1.3px;background:#424242;border-radius:1px"></div>
<div class="t" style="left:311.5px;top:48.65px;font-size:8.3px;height:8.3px;color:#717171;letter-spacing:-0.057px;">00_python_script</div>
<svg style="left:378px;top:49.8px" width="4" height="7" viewBox="0 0 4 6.4"><path d="M0.4 0.4 L3.2 3.2 L0.4 6" stroke="#717171" stroke-width="0.75" fill="none"/></svg>
<div class="t" style="left:384.5px;top:48.65px;font-size:8.3px;height:8.3px;color:#717171;letter-spacing:-0.112px;">calc_factor</div>
<svg style="left:427.6px;top:49.8px" width="4" height="7" viewBox="0 0 4 6.4"><path d="M0.4 0.4 L3.2 3.2 L0.4 6" stroke="#717171" stroke-width="0.75" fill="none"/></svg>
<svg style="left:434px;top:48.2px" width="9.3" height="9.3" viewBox="0 0 10 10"><path d="M5 0.3 C2.6 0.3 2.8 1.3 2.8 1.3 V2.5 H5.1 V2.9 H1.8 C1.8 2.9 0.2 2.7 0.2 5.1 C0.2 7.5 1.6 7.4 1.6 7.4 H2.5 V6.2 C2.5 6.2 2.4 4.8 3.9 4.8 H6.2 C6.2 4.8 7.5 4.8 7.5 3.5 V1.4 C7.5 1.4 7.7 0.3 5 0.3 Z" fill="#3572a5"/><path d="M5 9.7 C7.4 9.7 7.2 8.7 7.2 8.7 V7.5 H4.9 V7.1 H8.2 C8.2 7.1 9.8 7.3 9.8 4.9 C9.8 2.5 8.4 2.6 8.4 2.6 H7.5 V3.8 C7.5 3.8 7.6 5.2 6.1 5.2 H3.8 C3.8 5.2 2.5 5.2 2.5 6.5 V8.6 C2.5 8.6 2.3 9.7 5 9.7 Z" fill="#ffd43b"/></svg>
<div class="t" style="left:447.8px;top:48.65px;font-size:8.3px;height:8.3px;color:#717171;letter-spacing:-0.113px;">06_level10InferPriceTrend_pickle.py</div>
<svg style="left:582px;top:49.8px" width="4" height="7" viewBox="0 0 4 6.4"><path d="M0.4 0.4 L3.2 3.2 L0.4 6" stroke="#717171" stroke-width="0.75" fill="none"/></svg>
<div class="a" style="left:589.2px;top:55px;width:1px;height:1px;background:#717171;"></div>
<div class="a" style="left:591.3000000000001px;top:55px;width:1px;height:1px;background:#717171;"></div>
<div class="a" style="left:593.4000000000001px;top:55px;width:1px;height:1px;background:#717171;"></div>
<div class="a" style="left:301px;top:60px;width:942px;height:365px;overflow:hidden">
<div class="a" style="left:52px;top:77.2px;width:803px;height:15.4px;border:1px solid #e6e6e6;border-right:none"></div>
<div class="a" style="left:96.4px;top:77.6px;width:51.4px;height:14.6px;background:#d6d6d6"></div>
<div class="a" style="left:52px;top:139.7px;width:51.3px;height:14.6px;background:#d6d6d6"></div>
<div class="a" style="left:52.2px;top:263.8px;width:1px;height:110px;background:#d3d3d3"></div>
<div class="t mono" style="left:0;top:0.80px;width:35px;text-align:right;font-size:10.68px;line-height:15.54px;color:#237893">1</div>
<div class="t mono" style="left:51.5px;top:0.80px;font-size:10.68px;line-height:15.54px;color:#000"><span style="color:#af00db;">import</span> pandas <span style="color:#af00db;">as</span> pd</div>
<div class="t mono" style="left:0;top:16.34px;width:35px;text-align:right;font-size:10.68px;line-height:15.54px;color:#237893">2</div>
<div class="t mono" style="left:51.5px;top:16.34px;font-size:10.68px;line-height:15.54px;color:#000"><span style="color:#af00db;">import</span> numpy <span style="color:#af00db;">as</span> np</div>
<div class="t mono" style="left:0;top:31.88px;width:35px;text-align:right;font-size:10.68px;line-height:15.54px;color:#237893">3</div>
<div class="t mono" style="left:51.5px;top:31.88px;font-size:10.68px;line-height:15.54px;color:#000"><span style="color:#af00db;">import</span> os</div>
<div class="t mono" style="left:0;top:47.42px;width:35px;text-align:right;font-size:10.68px;line-height:15.54px;color:#237893">4</div>
<div class="t mono" style="left:51.5px;top:47.42px;font-size:10.68px;line-height:15.54px;color:#000"><span style="color:#af00db;">import</span> multiprocessing</div>
<div class="t mono" style="left:0;top:62.96px;width:35px;text-align:right;font-size:10.68px;line-height:15.54px;color:#237893">5</div>
<div class="t mono" style="left:51.5px;top:62.96px;font-size:10.68px;line-height:15.54px;color:#000"><span style="color:#af00db;">import</span> time</div>
<div class="t mono" style="left:0;top:78.50px;width:35px;text-align:right;font-size:10.68px;line-height:15.54px;color:#237893">6</div>
<div class="t mono" style="left:51.5px;top:78.50px;font-size:10.68px;line-height:15.54px;color:#000"><span style="color:#af00db;">import</span> warnings</div>
<div class="t mono" style="left:0;top:94.04px;width:35px;text-align:right;font-size:10.68px;line-height:15.54px;color:#237893">7</div>
<div class="t mono" style="left:51.5px;top:94.04px;font-size:10.68px;line-height:15.54px;color:#000"><span style="color:#af00db;">from</span> tqdm <span style="color:#af00db;">import</span> <span style="color:#267f99;">tqdm</span></div>
<div class="t mono" style="left:0;top:109.58px;width:35px;text-align:right;font-size:10.68px;line-height:15.54px;color:#237893">8</div>
<div class="t mono" style="left:51.5px;top:109.58px;font-size:10.68px;line-height:15.54px;color:#000"><span style="color:#af00db;">import</span> <span style="color:#9a9a9a;">datetime</span></div>
<div class="t mono" style="left:0;top:125.12px;width:35px;text-align:right;font-size:10.68px;line-height:15.54px;color:#237893">9</div>
<div class="t mono" style="left:51.5px;top:125.12px;font-size:10.68px;line-height:15.54px;color:#000"></div>
<div class="t mono" style="left:0;top:140.66px;width:35px;text-align:right;font-size:10.68px;line-height:15.54px;color:#237893">10</div>
<div class="t mono" style="left:51.5px;top:140.66px;font-size:10.68px;line-height:15.54px;color:#000">warnings.<span style="color:#795e26;">filterwarnings</span><span style="color:#0431fa;">(</span><span style="color:#a31515;">&quot;ignore&quot;</span><span style="color:#0431fa;">)</span></div>
<div class="t mono" style="left:0;top:156.20px;width:35px;text-align:right;font-size:10.68px;line-height:15.54px;color:#237893">11</div>
<div class="t mono" style="left:51.5px;top:156.20px;font-size:10.68px;line-height:15.54px;color:#000">pd.options.display.width <span style="color:#444;">=</span> <span style="color:#098658;">1200</span></div>
<div class="t mono" style="left:0;top:171.74px;width:35px;text-align:right;font-size:10.68px;line-height:15.54px;color:#237893">12</div>
<div class="t mono" style="left:51.5px;top:171.74px;font-size:10.68px;line-height:15.54px;color:#000">pd.options.display.max_colwidth <span style="color:#444;">=</span> <span style="color:#098658;">100</span></div>
<div class="t mono" style="left:0;top:187.28px;width:35px;text-align:right;font-size:10.68px;line-height:15.54px;color:#237893">13</div>
<div class="t mono" style="left:51.5px;top:187.28px;font-size:10.68px;line-height:15.54px;color:#000">pd.options.display.max_columns <span style="color:#444;">=</span> <span style="color:#098658;">10</span></div>
<div class="t mono" style="left:0;top:202.82px;width:35px;text-align:right;font-size:10.68px;line-height:15.54px;color:#237893">14</div>
<div class="t mono" style="left:51.5px;top:202.82px;font-size:10.68px;line-height:15.54px;color:#000">pd.options.mode.chained_assignment <span style="color:#444;">=</span> <span style="color:#0000ff;">None</span></div>
<div class="t mono" style="left:0;top:218.36px;width:35px;text-align:right;font-size:10.68px;line-height:15.54px;color:#237893">15</div>
<div class="t mono" style="left:51.5px;top:218.36px;font-size:10.68px;line-height:15.54px;color:#000"></div>
<div class="t mono" style="left:0;top:233.90px;width:35px;text-align:right;font-size:10.68px;line-height:15.54px;color:#237893">16</div>
<div class="t mono" style="left:51.5px;top:233.90px;font-size:10.68px;line-height:15.54px;color:#000"></div>
<div class="t mono" style="left:0;top:249.44px;width:35px;text-align:right;font-size:10.68px;line-height:15.54px;color:#237893">17</div>
<div class="t mono" style="left:51.5px;top:249.44px;font-size:10.68px;line-height:15.54px;color:#000"><span style="color:#0000ff;">def</span> <span style="color:#8d7b58;">level10_InferPriceTrend</span><span style="color:#0431fa;">(</span><span style="color:#7b7f95;">df</span>, <span style="color:#7b7f95;">lag1</span>=<span style="color:#098658;">60</span>, <span style="color:#7b7f95;">lag2</span>=<span style="color:#098658;">20</span><span style="color:#0431fa;">)</span>:</div>
<div class="t mono" style="left:0;top:264.98px;width:35px;text-align:right;font-size:10.68px;line-height:15.54px;color:#237893">18</div>
<div class="t mono" style="left:51.5px;top:264.98px;font-size:10.68px;line-height:15.54px;color:#000">    <span style="color:#a31515;">&#x27;&#x27;&#x27;</span></div>
<div class="t mono" style="left:0;top:280.52px;width:35px;text-align:right;font-size:10.68px;line-height:15.54px;color:#237893">19</div>
<div class="t mono" style="left:51.5px;top:280.52px;font-size:10.68px;line-height:15.54px;color:#000">    <span style="color:#b07a78;font-family:&quot;Liberation Serif&quot;,serif;font-size:12.2px">十档买卖委托均价线性回归斜率</span></div>
<div class="t mono" style="left:0;top:296.06px;width:35px;text-align:right;font-size:10.68px;line-height:15.54px;color:#237893">20</div>
<div class="t mono" style="left:51.5px;top:296.06px;font-size:10.68px;line-height:15.54px;color:#000">    <span style="color:#a31515;">:param df:</span></div>
<div class="t mono" style="left:0;top:311.60px;width:35px;text-align:right;font-size:10.68px;line-height:15.54px;color:#237893">21</div>
<div class="t mono" style="left:51.5px;top:311.60px;font-size:10.68px;line-height:15.54px;color:#000">    <span style="color:#a31515;">:param lag1:</span></div>
<div class="t mono" style="left:0;top:327.14px;width:35px;text-align:right;font-size:10.68px;line-height:15.54px;color:#237893">22</div>
<div class="t mono" style="left:51.5px;top:327.14px;font-size:10.68px;line-height:15.54px;color:#000">    <span style="color:#a31515;">:param lag2:</span></div>
<div class="t mono" style="left:0;top:342.68px;width:35px;text-align:right;font-size:10.68px;line-height:15.54px;color:#237893">23</div>
<div class="t mono" style="left:51.5px;top:342.68px;font-size:10.68px;line-height:15.54px;color:#000">    <span style="color:#a31515;">:return:</span></div>
<div class="t mono" style="left:0;top:358.22px;width:35px;text-align:right;font-size:10.68px;line-height:15.54px;color:#237893">24</div>
<div class="t mono" style="left:51.5px;top:358.22px;font-size:10.68px;line-height:15.54px;color:#000">    <span style="color:#a31515;">&#x27;&#x27;&#x27;</span></div>
<div class="a" style="left:147.6px;top:77.4px;width:1.6px;height:15px;background:#111"></div>
</div>
<svg style="left:1155px;top:55px" width="80" height="130" viewBox="1155 55 80 130"><rect x="1161.50" y="59.70" width="3.00" height="1.05" fill="#c77fe6"/><rect x="1165.50" y="59.70" width="5.07" height="1.05" fill="#666666"/><rect x="1170.57" y="59.70" width="2.97" height="1.05" fill="#666666"/><rect x="1161.50" y="60.95" width="3.00" height="1.05" fill="#c77fe6"/><rect x="1165.50" y="60.95" width="2.88" height="1.05" fill="#666666"/><rect x="1169.58" y="60.95" width="3.90" height="1.05" fill="#666666"/><rect x="1173.47" y="60.95" width="1.03" height="1.05" fill="#666666"/><rect x="1161.50" y="62.20" width="3.00" height="1.05" fill="#c77fe6"/><rect x="1165.50" y="62.20" width="5.26" height="1.05" fill="#666666"/><rect x="1171.96" y="62.20" width="0.74" height="1.05" fill="#666666"/><rect x="1161.50" y="63.45" width="3.00" height="1.05" fill="#c77fe6"/><rect x="1165.50" y="63.45" width="8.66" height="1.05" fill="#666666"/><rect x="1175.36" y="63.45" width="2.74" height="1.05" fill="#666666"/><rect x="1161.50" y="64.70" width="3.00" height="1.05" fill="#c77fe6"/><rect x="1165.50" y="64.70" width="6.12" height="1.05" fill="#666666"/><rect x="1171.62" y="64.70" width="2.28" height="1.05" fill="#666666"/><rect x="1161.50" y="65.95" width="3.00" height="1.05" fill="#c77fe6"/><rect x="1165.50" y="65.95" width="4.51" height="1.05" fill="#666666"/><rect x="1170.01" y="65.95" width="3.17" height="1.05" fill="#666666"/><rect x="1174.37" y="65.95" width="1.93" height="1.05" fill="#666666"/><rect x="1161.50" y="67.20" width="3.00" height="1.05" fill="#c77fe6"/><rect x="1165.50" y="67.20" width="3.00" height="1.05" fill="#666666"/><rect x="1161.50" y="68.45" width="3.00" height="1.05" fill="#c77fe6"/><rect x="1165.50" y="68.45" width="3.00" height="1.05" fill="#666666"/><rect x="1165.50" y="67.20" width="4.50" height="1.05" fill="#666666"/><rect x="1171.00" y="67.20" width="3.00" height="1.05" fill="#c77fe6"/><rect x="1175.00" y="67.20" width="2.00" height="1.05" fill="#7fbfd0"/><rect x="1165.50" y="68.45" width="3.03" height="1.05" fill="#bbbbbb"/><rect x="1169.13" y="68.45" width="2.87" height="1.05" fill="#bbbbbb"/><rect x="1161.30" y="71.80" width="7.24" height="1.05" fill="#5a5a5a"/><rect x="1169.14" y="71.80" width="6.46" height="1.05" fill="#5a5a5a"/><rect x="1175.60" y="71.80" width="2.20" height="1.05" fill="#5a5a5a"/><rect x="1161.30" y="73.05" width="3.57" height="1.05" fill="#5a5a5a"/><rect x="1165.47" y="73.05" width="3.49" height="1.05" fill="#5a5a5a"/><rect x="1169.56" y="73.05" width="5.24" height="1.05" fill="#5a5a5a"/><rect x="1174.80" y="73.05" width="0.75" height="1.05" fill="#5a5a5a"/><rect x="1161.30" y="74.30" width="7.63" height="1.05" fill="#5a5a5a"/><rect x="1169.53" y="74.30" width="4.71" height="1.05" fill="#5a5a5a"/><rect x="1174.84" y="74.30" width="4.46" height="1.05" fill="#5a5a5a"/><rect x="1161.30" y="75.55" width="7.68" height="1.05" fill="#5a5a5a"/><rect x="1168.98" y="75.55" width="7.96" height="1.05" fill="#5a5a5a"/><rect x="1177.54" y="75.55" width="1.76" height="1.05" fill="#5a5a5a"/><rect x="1161.30" y="76.80" width="2.89" height="1.05" fill="#5a5a5a"/><rect x="1164.79" y="76.80" width="6.71" height="1.05" fill="#5a5a5a"/><rect x="1172.10" y="76.80" width="4.35" height="1.05" fill="#5a5a5a"/><rect x="1177.05" y="76.80" width="5.25" height="1.05" fill="#5a5a5a"/><rect x="1176.00" y="71.80" width="2.65" height="1.05" fill="#d08080"/><rect x="1179.25" y="71.80" width="1.75" height="1.05" fill="#d08080"/><rect x="1181.00" y="73.05" width="3.00" height="1.05" fill="#70b090"/><rect x="1184.00" y="74.30" width="2.00" height="1.05" fill="#70b090"/><rect x="1185.00" y="76.80" width="3.00" height="1.05" fill="#7f7fff"/><rect x="1161.30" y="80.60" width="2.20" height="1.05" fill="#7f7fff"/><rect x="1164.00" y="80.60" width="3.02" height="1.05" fill="#b8a67a"/><rect x="1167.62" y="80.60" width="5.11" height="1.05" fill="#b8a67a"/><rect x="1173.33" y="80.60" width="7.67" height="1.05" fill="#b8a67a"/><rect x="1182.00" y="80.60" width="8.12" height="1.05" fill="#8fa0a0"/><rect x="1190.72" y="80.60" width="2.28" height="1.05" fill="#8fa0a0"/><rect x="1164.50" y="83.00" width="6.94" height="1.05" fill="#d07070"/><rect x="1172.04" y="83.00" width="8.73" height="1.05" fill="#d07070"/><rect x="1180.76" y="83.00" width="0.94" height="1.05" fill="#d07070"/><rect x="1164.50" y="84.25" width="4.01" height="1.05" fill="#d07070"/><rect x="1168.51" y="84.25" width="2.39" height="1.05" fill="#d07070"/><rect x="1164.50" y="85.50" width="3.69" height="1.05" fill="#d07070"/><rect x="1168.79" y="85.50" width="2.11" height="1.05" fill="#d07070"/><rect x="1164.50" y="86.75" width="5.97" height="1.05" fill="#d07070"/><rect x="1164.50" y="88.00" width="6.18" height="1.05" fill="#d07070"/><rect x="1170.68" y="88.00" width="0.22" height="1.05" fill="#d07070"/><rect x="1164.50" y="89.25" width="2.80" height="1.05" fill="#d07070"/><rect x="1164.50" y="91.00" width="2.00" height="1.05" fill="#7f7fff"/><rect x="1167.00" y="91.00" width="5.05" height="1.05" fill="#999999"/><rect x="1172.65" y="91.00" width="5.06" height="1.05" fill="#999999"/><rect x="1178.31" y="91.00" width="6.62" height="1.05" fill="#999999"/><rect x="1184.94" y="91.00" width="3.06" height="1.05" fill="#999999"/><rect x="1164.50" y="92.30" width="3.50" height="1.05" fill="#8a8ad0"/><rect x="1164.50" y="93.50" width="4.71" height="1.05" fill="#c77fe6"/><rect x="1169.21" y="93.50" width="0.79" height="1.05" fill="#c77fe6"/><rect x="1170.00" y="93.50" width="3.48" height="1.05" fill="#70b090"/><rect x="1173.48" y="93.50" width="1.52" height="1.05" fill="#70b090"/><rect x="1166.50" y="94.70" width="2.50" height="1.05" fill="#c77fe6"/><rect x="1170.00" y="94.70" width="3.00" height="1.05" fill="#7fbfd0"/><rect x="1167.00" y="96.00" width="3.00" height="1.05" fill="#7f8fd0"/><rect x="1170.50" y="96.00" width="6.41" height="1.05" fill="#c98080"/><rect x="1177.51" y="96.00" width="3.30" height="1.05" fill="#c98080"/><rect x="1181.41" y="96.00" width="8.96" height="1.05" fill="#c98080"/><rect x="1190.97" y="96.00" width="5.62" height="1.05" fill="#c98080"/><rect x="1197.19" y="96.00" width="3.06" height="1.05" fill="#c98080"/><rect x="1200.25" y="96.00" width="2.65" height="1.05" fill="#c98080"/><rect x="1185.00" y="96.00" width="5.61" height="1.05" fill="#7f7fc0"/><rect x="1190.61" y="96.00" width="5.86" height="1.05" fill="#7f7fc0"/><rect x="1196.47" y="96.00" width="8.68" height="1.05" fill="#7f7fc0"/><rect x="1206.35" y="96.00" width="0.55" height="1.05" fill="#7f7fc0"/><rect x="1167.00" y="97.25" width="3.00" height="1.05" fill="#7f8fd0"/><rect x="1170.50" y="97.25" width="4.44" height="1.05" fill="#c98080"/><rect x="1174.94" y="97.25" width="7.03" height="1.05" fill="#c98080"/><rect x="1182.56" y="97.25" width="5.87" height="1.05" fill="#c98080"/><rect x="1188.43" y="97.25" width="4.81" height="1.05" fill="#c98080"/><rect x="1193.24" y="97.25" width="5.96" height="1.05" fill="#c98080"/><rect x="1185.00" y="97.25" width="4.64" height="1.05" fill="#7f7fc0"/><rect x="1189.64" y="97.25" width="6.49" height="1.05" fill="#7f7fc0"/><rect x="1196.13" y="97.25" width="7.74" height="1.05" fill="#7f7fc0"/><rect x="1167.00" y="98.50" width="3.00" height="1.05" fill="#7f8fd0"/><rect x="1170.50" y="98.50" width="3.80" height="1.05" fill="#c98080"/><rect x="1174.90" y="98.50" width="4.81" height="1.05" fill="#c98080"/><rect x="1179.71" y="98.50" width="8.93" height="1.05" fill="#c98080"/><rect x="1189.24" y="98.50" width="5.57" height="1.05" fill="#c98080"/><rect x="1194.81" y="98.50" width="7.00" height="1.05" fill="#c98080"/><rect x="1185.00" y="98.50" width="5.41" height="1.05" fill="#7f7fc0"/><rect x="1191.01" y="98.50" width="8.71" height="1.05" fill="#7f7fc0"/><rect x="1200.31" y="98.50" width="3.02" height="1.05" fill="#7f7fc0"/><rect x="1203.34" y="98.50" width="2.48" height="1.05" fill="#7f7fc0"/><rect x="1167.00" y="99.75" width="3.00" height="1.05" fill="#7f8fd0"/><rect x="1170.50" y="99.75" width="6.56" height="1.05" fill="#c98080"/><rect x="1178.26" y="99.75" width="7.96" height="1.05" fill="#c98080"/><rect x="1185.00" y="99.75" width="5.70" height="1.05" fill="#7f7fc0"/><rect x="1167.00" y="101.00" width="3.00" height="1.05" fill="#7f8fd0"/><rect x="1170.50" y="101.00" width="7.93" height="1.05" fill="#c98080"/><rect x="1178.43" y="101.00" width="8.41" height="1.05" fill="#c98080"/><rect x="1186.84" y="101.00" width="5.61" height="1.05" fill="#c98080"/><rect x="1192.45" y="101.00" width="5.32" height="1.05" fill="#c98080"/><rect x="1198.37" y="101.00" width="0.21" height="1.05" fill="#c98080"/><rect x="1185.00" y="101.00" width="5.51" height="1.05" fill="#7f7fc0"/><rect x="1190.51" y="101.00" width="7.21" height="1.05" fill="#7f7fc0"/><rect x="1197.72" y="101.00" width="4.86" height="1.05" fill="#7f7fc0"/><rect x="1164.50" y="102.30" width="2.50" height="1.05" fill="#7f8fd0"/><rect x="1167.50" y="102.30" width="7.74" height="1.05" fill="#8e8e8e"/><rect x="1175.24" y="102.30" width="6.48" height="1.05" fill="#8e8e8e"/><rect x="1182.92" y="102.30" width="8.87" height="1.05" fill="#8e8e8e"/><rect x="1192.39" y="102.30" width="3.51" height="1.05" fill="#8e8e8e"/><rect x="1197.10" y="102.30" width="3.35" height="1.05" fill="#8e8e8e"/><rect x="1200.45" y="102.30" width="7.70" height="1.05" fill="#8e8e8e"/><rect x="1208.15" y="102.30" width="3.85" height="1.05" fill="#8e8e8e"/><rect x="1164.50" y="103.50" width="2.50" height="1.05" fill="#7f8fd0"/><rect x="1167.50" y="103.50" width="7.87" height="1.05" fill="#c98080"/><rect x="1175.37" y="103.50" width="2.68" height="1.05" fill="#c98080"/><rect x="1178.05" y="103.50" width="4.40" height="1.05" fill="#c98080"/><rect x="1182.46" y="103.50" width="7.46" height="1.05" fill="#c98080"/><rect x="1190.52" y="103.50" width="4.19" height="1.05" fill="#c98080"/><rect x="1195.31" y="103.50" width="7.92" height="1.05" fill="#c98080"/><rect x="1203.23" y="103.50" width="1.77" height="1.05" fill="#c98080"/><rect x="1164.00" y="106.20" width="1.50" height="1.05" fill="#7f7fff"/><rect x="1166.00" y="106.20" width="4.00" height="1.05" fill="#999"/><rect x="1166.00" y="107.50" width="4.00" height="1.05" fill="#aaa"/><rect x="1167.00" y="108.70" width="3.35" height="1.05" fill="#aaa"/><rect x="1170.35" y="108.70" width="4.65" height="1.05" fill="#aaa"/><rect x="1167.00" y="109.90" width="4.00" height="1.05" fill="#aaa"/><rect x="1167.00" y="111.10" width="6.46" height="1.05" fill="#c77fe6"/><rect x="1173.46" y="111.10" width="3.62" height="1.05" fill="#c77fe6"/><rect x="1177.68" y="111.10" width="3.32" height="1.05" fill="#c77fe6"/><rect x="1182.00" y="111.10" width="6.12" height="1.05" fill="#8fa6b6"/><rect x="1188.72" y="111.10" width="6.94" height="1.05" fill="#8fa6b6"/><rect x="1196.85" y="111.10" width="6.11" height="1.05" fill="#8fa6b6"/><rect x="1202.96" y="111.10" width="8.24" height="1.05" fill="#8fa6b6"/><rect x="1211.20" y="111.10" width="4.12" height="1.05" fill="#8fa6b6"/><rect x="1215.92" y="111.10" width="1.08" height="1.05" fill="#8fa6b6"/><rect x="1164.50" y="113.70" width="2.50" height="1.05" fill="#7f8fd0"/><rect x="1167.50" y="113.70" width="2.68" height="1.05" fill="#c98080"/><rect x="1170.18" y="113.70" width="5.38" height="1.05" fill="#c98080"/><rect x="1176.76" y="113.70" width="8.83" height="1.05" fill="#c98080"/><rect x="1186.79" y="113.70" width="3.21" height="1.05" fill="#c98080"/><rect x="1190.00" y="113.70" width="5.44" height="1.05" fill="#8f8fc0"/><rect x="1196.64" y="113.70" width="7.75" height="1.05" fill="#8f8fc0"/><rect x="1205.59" y="113.70" width="8.62" height="1.05" fill="#8f8fc0"/><rect x="1215.41" y="113.70" width="8.20" height="1.05" fill="#8f8fc0"/><rect x="1224.21" y="113.70" width="5.79" height="1.05" fill="#8f8fc0"/><rect x="1164.50" y="114.95" width="2.50" height="1.05" fill="#7f8fd0"/><rect x="1167.50" y="114.95" width="5.21" height="1.05" fill="#c98080"/><rect x="1173.31" y="114.95" width="5.37" height="1.05" fill="#c98080"/><rect x="1178.68" y="114.95" width="6.86" height="1.05" fill="#c98080"/><rect x="1186.14" y="114.95" width="2.98" height="1.05" fill="#c98080"/><rect x="1189.72" y="114.95" width="0.28" height="1.05" fill="#c98080"/><rect x="1190.00" y="114.95" width="8.61" height="1.05" fill="#8f8fc0"/><rect x="1199.21" y="114.95" width="3.43" height="1.05" fill="#8f8fc0"/><rect x="1202.64" y="114.95" width="8.79" height="1.05" fill="#8f8fc0"/><rect x="1211.43" y="114.95" width="7.35" height="1.05" fill="#8f8fc0"/><rect x="1218.78" y="114.95" width="5.09" height="1.05" fill="#8f8fc0"/><rect x="1224.47" y="114.95" width="2.53" height="1.05" fill="#8f8fc0"/><rect x="1164.50" y="116.20" width="2.50" height="1.05" fill="#7f8fd0"/><rect x="1167.50" y="116.20" width="8.96" height="1.05" fill="#c98080"/><rect x="1177.06" y="116.20" width="4.70" height="1.05" fill="#c98080"/><rect x="1181.77" y="116.20" width="4.82" height="1.05" fill="#c98080"/><rect x="1186.58" y="116.20" width="3.42" height="1.05" fill="#c98080"/><rect x="1190.00" y="116.20" width="4.70" height="1.05" fill="#8f8fc0"/><rect x="1195.30" y="116.20" width="5.36" height="1.05" fill="#8f8fc0"/><rect x="1200.66" y="116.20" width="5.00" height="1.05" fill="#8f8fc0"/><rect x="1206.86" y="116.20" width="6.56" height="1.05" fill="#8f8fc0"/><rect x="1214.61" y="116.20" width="8.75" height="1.05" fill="#8f8fc0"/><rect x="1223.36" y="116.20" width="0.64" height="1.05" fill="#8f8fc0"/><rect x="1164.50" y="117.45" width="2.50" height="1.05" fill="#7f8fd0"/><rect x="1167.50" y="117.45" width="3.05" height="1.05" fill="#c98080"/><rect x="1171.15" y="117.45" width="2.76" height="1.05" fill="#c98080"/><rect x="1173.90" y="117.45" width="4.26" height="1.05" fill="#c98080"/><rect x="1178.16" y="117.45" width="7.83" height="1.05" fill="#c98080"/><rect x="1186.59" y="117.45" width="3.41" height="1.05" fill="#c98080"/><rect x="1190.00" y="117.45" width="8.47" height="1.05" fill="#8f8fc0"/><rect x="1199.67" y="117.45" width="5.71" height="1.05" fill="#8f8fc0"/><rect x="1205.99" y="117.45" width="3.08" height="1.05" fill="#8f8fc0"/><rect x="1209.07" y="117.45" width="7.70" height="1.05" fill="#8f8fc0"/><rect x="1216.77" y="117.45" width="4.23" height="1.05" fill="#8f8fc0"/><rect x="1167.00" y="118.70" width="4.25" height="1.05" fill="#b0a0a0"/><rect x="1171.25" y="118.70" width="6.62" height="1.05" fill="#b0a0a0"/><rect x="1178.47" y="118.70" width="3.04" height="1.05" fill="#b0a0a0"/><rect x="1181.52" y="118.70" width="2.93" height="1.05" fill="#b0a0a0"/><rect x="1184.45" y="118.70" width="3.55" height="1.05" fill="#b0a0a0"/><rect x="1167.00" y="119.95" width="8.96" height="1.05" fill="#b0a0a0"/><rect x="1176.56" y="119.95" width="7.44" height="1.05" fill="#b0a0a0"/><rect x="1167.00" y="121.20" width="6.54" height="1.05" fill="#b0a0a0"/><rect x="1173.54" y="121.20" width="5.92" height="1.05" fill="#b0a0a0"/><rect x="1179.47" y="121.20" width="0.53" height="1.05" fill="#b0a0a0"/><rect x="1161.70" y="122.50" width="1.30" height="1.05" fill="#7f7fff"/><rect x="1164.00" y="122.50" width="3.81" height="1.05" fill="#b8a67a"/><rect x="1168.41" y="122.50" width="6.59" height="1.05" fill="#b8a67a"/><rect x="1176.20" y="122.50" width="7.44" height="1.05" fill="#b8a67a"/><rect x="1184.23" y="122.50" width="4.77" height="1.05" fill="#b8a67a"/><rect x="1165.00" y="123.80" width="4.26" height="1.05" fill="#aaa"/><rect x="1169.26" y="123.80" width="0.74" height="1.05" fill="#aaa"/><rect x="1167.00" y="125.00" width="2.60" height="1.05" fill="#aaa"/><rect x="1170.80" y="125.00" width="1.20" height="1.05" fill="#aaa"/><rect x="1169.50" y="127.00" width="5.84" height="1.05" fill="#b39090"/><rect x="1175.34" y="127.00" width="8.58" height="1.05" fill="#b39090"/><rect x="1183.92" y="127.00" width="6.78" height="1.05" fill="#b39090"/><rect x="1191.30" y="127.00" width="6.77" height="1.05" fill="#b39090"/><rect x="1199.26" y="127.00" width="6.74" height="1.05" fill="#b39090"/><rect x="1169.50" y="128.25" width="8.81" height="1.05" fill="#b39090"/><rect x="1178.91" y="128.25" width="6.97" height="1.05" fill="#b39090"/><rect x="1185.88" y="128.25" width="4.73" height="1.05" fill="#b39090"/><rect x="1190.60" y="128.25" width="5.13" height="1.05" fill="#b39090"/><rect x="1196.34" y="128.25" width="8.88" height="1.05" fill="#b39090"/><rect x="1205.22" y="128.25" width="2.59" height="1.05" fill="#b39090"/><rect x="1208.41" y="128.25" width="5.30" height="1.05" fill="#b39090"/><rect x="1213.71" y="128.25" width="3.05" height="1.05" fill="#b39090"/><rect x="1217.36" y="128.25" width="4.64" height="1.05" fill="#b39090"/><rect x="1169.50" y="129.50" width="6.39" height="1.05" fill="#b39090"/><rect x="1176.49" y="129.50" width="2.79" height="1.05" fill="#b39090"/><rect x="1179.29" y="129.50" width="3.52" height="1.05" fill="#b39090"/><rect x="1183.41" y="129.50" width="2.52" height="1.05" fill="#b39090"/><rect x="1186.53" y="129.50" width="8.75" height="1.05" fill="#b39090"/><rect x="1196.49" y="129.50" width="4.60" height="1.05" fill="#b39090"/><rect x="1201.09" y="129.50" width="8.78" height="1.05" fill="#b39090"/><rect x="1169.50" y="130.75" width="3.92" height="1.05" fill="#b39090"/><rect x="1173.42" y="130.75" width="2.51" height="1.05" fill="#b39090"/><rect x="1176.52" y="130.75" width="3.05" height="1.05" fill="#b39090"/><rect x="1180.17" y="130.75" width="5.77" height="1.05" fill="#b39090"/><rect x="1185.94" y="130.75" width="4.06" height="1.05" fill="#b39090"/><rect x="1164.50" y="134.60" width="2.50" height="1.05" fill="#c77fe6"/><rect x="1167.50" y="134.60" width="3.44" height="1.05" fill="#9a9ab0"/><rect x="1172.14" y="134.60" width="2.77" height="1.05" fill="#9a9ab0"/><rect x="1174.91" y="134.60" width="4.45" height="1.05" fill="#9a9ab0"/><rect x="1179.35" y="134.60" width="3.05" height="1.05" fill="#9a9ab0"/><rect x="1183.60" y="134.60" width="7.40" height="1.05" fill="#9a9ab0"/><rect x="1161.70" y="138.50" width="2.80" height="1.05" fill="#7f7fff"/><rect x="1165.00" y="138.50" width="5.03" height="1.05" fill="#7fbfd0"/><rect x="1170.63" y="138.50" width="5.37" height="1.05" fill="#7fbfd0"/><rect x="1164.50" y="141.40" width="2.00" height="1.05" fill="#7f7fff"/><rect x="1167.00" y="141.40" width="6.68" height="1.05" fill="#999"/><rect x="1173.68" y="141.40" width="7.86" height="1.05" fill="#999"/><rect x="1182.74" y="141.40" width="6.58" height="1.05" fill="#999"/><rect x="1190.52" y="141.40" width="0.48" height="1.05" fill="#999"/><rect x="1167.00" y="142.70" width="7.39" height="1.05" fill="#aaa"/><rect x="1175.59" y="142.70" width="2.41" height="1.05" fill="#aaa"/><rect x="1167.00" y="144.00" width="7.87" height="1.05" fill="#aaa"/><rect x="1176.07" y="144.00" width="7.69" height="1.05" fill="#aaa"/><rect x="1183.76" y="144.00" width="3.05" height="1.05" fill="#aaa"/><rect x="1186.81" y="144.00" width="3.37" height="1.05" fill="#aaa"/><rect x="1190.78" y="144.00" width="0.22" height="1.05" fill="#aaa"/><rect x="1164.50" y="147.20" width="2.00" height="1.05" fill="#7f7fff"/><rect x="1167.00" y="147.20" width="2.83" height="1.05" fill="#a0a0a0"/><rect x="1169.83" y="147.20" width="6.57" height="1.05" fill="#a0a0a0"/><rect x="1176.40" y="147.20" width="5.68" height="1.05" fill="#a0a0a0"/><rect x="1182.08" y="147.20" width="5.47" height="1.05" fill="#a0a0a0"/><rect x="1187.55" y="147.20" width="7.36" height="1.05" fill="#a0a0a0"/><rect x="1196.11" y="147.20" width="8.34" height="1.05" fill="#a0a0a0"/><rect x="1204.45" y="147.20" width="6.79" height="1.05" fill="#a0a0a0"/><rect x="1211.24" y="147.20" width="5.76" height="1.05" fill="#a0a0a0"/><rect x="1167.00" y="148.50" width="4.14" height="1.05" fill="#aaa"/><rect x="1171.14" y="148.50" width="8.00" height="1.05" fill="#aaa"/><rect x="1179.14" y="148.50" width="7.24" height="1.05" fill="#aaa"/><rect x="1186.38" y="148.50" width="3.62" height="1.05" fill="#aaa"/><rect x="1164.50" y="151.00" width="2.00" height="1.05" fill="#7f7fff"/><rect x="1167.00" y="151.00" width="3.00" height="1.05" fill="#b89a9a"/><rect x="1170.60" y="151.00" width="7.49" height="1.05" fill="#b89a9a"/><rect x="1179.28" y="151.00" width="6.61" height="1.05" fill="#b89a9a"/><rect x="1185.90" y="151.00" width="3.00" height="1.05" fill="#b89a9a"/><rect x="1188.90" y="151.00" width="4.66" height="1.05" fill="#b89a9a"/><rect x="1194.16" y="151.00" width="6.54" height="1.05" fill="#b89a9a"/><rect x="1200.69" y="151.00" width="2.58" height="1.05" fill="#b89a9a"/><rect x="1203.28" y="151.00" width="5.66" height="1.05" fill="#b89a9a"/><rect x="1208.93" y="151.00" width="7.00" height="1.05" fill="#b89a9a"/><rect x="1216.53" y="151.00" width="4.39" height="1.05" fill="#b89a9a"/><rect x="1222.12" y="151.00" width="4.36" height="1.05" fill="#b89a9a"/><rect x="1227.08" y="151.00" width="4.62" height="1.05" fill="#b89a9a"/><rect x="1161.70" y="156.50" width="2.30" height="1.05" fill="#c77fe6"/><rect x="1164.50" y="156.50" width="3.80" height="1.05" fill="#aaa"/><rect x="1168.30" y="156.50" width="8.59" height="1.05" fill="#aaa"/><rect x="1176.88" y="156.50" width="1.12" height="1.05" fill="#aaa"/><rect x="1164.50" y="158.00" width="7.83" height="1.05" fill="#70b070"/><rect x="1172.93" y="158.00" width="7.07" height="1.05" fill="#70b070"/><rect x="1164.50" y="159.50" width="2.50" height="1.05" fill="#7f8fd0"/><rect x="1167.50" y="159.50" width="2.98" height="1.05" fill="#c98080"/><rect x="1170.48" y="159.50" width="3.42" height="1.05" fill="#c98080"/><rect x="1175.11" y="159.50" width="4.20" height="1.05" fill="#c98080"/><rect x="1179.91" y="159.50" width="3.36" height="1.05" fill="#c98080"/><rect x="1184.47" y="159.50" width="4.32" height="1.05" fill="#c98080"/><rect x="1188.79" y="159.50" width="7.07" height="1.05" fill="#c98080"/><rect x="1195.86" y="159.50" width="5.74" height="1.05" fill="#c98080"/><rect x="1202.20" y="159.50" width="5.06" height="1.05" fill="#c98080"/><rect x="1207.26" y="159.50" width="2.52" height="1.05" fill="#c98080"/><rect x="1210.38" y="159.50" width="6.93" height="1.05" fill="#c98080"/><rect x="1217.91" y="159.50" width="4.46" height="1.05" fill="#c98080"/><rect x="1222.37" y="159.50" width="5.21" height="1.05" fill="#c98080"/><rect x="1164.50" y="160.85" width="2.50" height="1.05" fill="#7f8fd0"/><rect x="1167.50" y="160.85" width="2.51" height="1.05" fill="#8f9fc0"/><rect x="1170.61" y="160.85" width="7.95" height="1.05" fill="#8f9fc0"/><rect x="1178.57" y="160.85" width="8.61" height="1.05" fill="#8f9fc0"/><rect x="1187.17" y="160.85" width="7.13" height="1.05" fill="#8f9fc0"/><rect x="1194.91" y="160.85" width="4.15" height="1.05" fill="#8f9fc0"/><rect x="1199.06" y="160.85" width="0.94" height="1.05" fill="#8f9fc0"/><rect x="1164.50" y="162.20" width="2.50" height="1.05" fill="#7f8fd0"/><rect x="1167.50" y="162.20" width="7.41" height="1.05" fill="#a0a0a0"/><rect x="1174.91" y="162.20" width="4.32" height="1.05" fill="#a0a0a0"/><rect x="1179.24" y="162.20" width="7.93" height="1.05" fill="#a0a0a0"/><rect x="1187.76" y="162.20" width="6.63" height="1.05" fill="#a0a0a0"/><rect x="1194.39" y="162.20" width="4.12" height="1.05" fill="#a0a0a0"/><rect x="1199.11" y="162.20" width="5.34" height="1.05" fill="#a0a0a0"/><rect x="1205.04" y="162.20" width="3.73" height="1.05" fill="#a0a0a0"/><rect x="1209.38" y="162.20" width="0.62" height="1.05" fill="#a0a0a0"/><rect x="1164.50" y="163.55" width="2.50" height="1.05" fill="#7f8fd0"/><rect x="1167.50" y="163.55" width="8.44" height="1.05" fill="#c98080"/><rect x="1177.14" y="163.55" width="6.07" height="1.05" fill="#c98080"/><rect x="1183.21" y="163.55" width="2.82" height="1.05" fill="#c98080"/><rect x="1186.63" y="163.55" width="3.37" height="1.05" fill="#c98080"/><rect x="1164.50" y="164.90" width="2.50" height="1.05" fill="#7f8fd0"/><rect x="1167.50" y="164.90" width="5.66" height="1.05" fill="#8f9fc0"/><rect x="1174.36" y="164.90" width="3.33" height="1.05" fill="#8f9fc0"/><rect x="1178.28" y="164.90" width="5.20" height="1.05" fill="#8f9fc0"/><rect x="1184.08" y="164.90" width="4.44" height="1.05" fill="#8f9fc0"/><rect x="1189.12" y="164.90" width="5.14" height="1.05" fill="#8f9fc0"/><rect x="1194.26" y="164.90" width="4.46" height="1.05" fill="#8f9fc0"/><rect x="1199.91" y="164.90" width="6.85" height="1.05" fill="#8f9fc0"/><rect x="1206.76" y="164.90" width="3.59" height="1.05" fill="#8f9fc0"/><rect x="1210.35" y="164.90" width="2.99" height="1.05" fill="#8f9fc0"/><rect x="1214.54" y="164.90" width="7.46" height="1.05" fill="#8f9fc0"/><rect x="1164.50" y="166.25" width="2.50" height="1.05" fill="#7f8fd0"/><rect x="1167.50" y="166.25" width="2.50" height="1.05" fill="#a0a0a0"/><rect x="1164.50" y="167.60" width="2.50" height="1.05" fill="#7f8fd0"/><rect x="1167.50" y="167.60" width="3.75" height="1.05" fill="#c98080"/><rect x="1171.25" y="167.60" width="3.64" height="1.05" fill="#c98080"/><rect x="1176.09" y="167.60" width="3.09" height="1.05" fill="#c98080"/><rect x="1179.18" y="167.60" width="4.89" height="1.05" fill="#c98080"/><rect x="1185.27" y="167.60" width="3.81" height="1.05" fill="#c98080"/><rect x="1189.09" y="167.60" width="7.37" height="1.05" fill="#c98080"/><rect x="1197.06" y="167.60" width="4.99" height="1.05" fill="#c98080"/><rect x="1203.25" y="167.60" width="3.87" height="1.05" fill="#c98080"/><rect x="1207.71" y="167.60" width="4.70" height="1.05" fill="#c98080"/><rect x="1212.41" y="167.60" width="4.59" height="1.05" fill="#c98080"/><rect x="1164.50" y="168.95" width="2.50" height="1.05" fill="#7f8fd0"/><rect x="1167.50" y="168.95" width="6.96" height="1.05" fill="#8f9fc0"/><rect x="1175.66" y="168.95" width="6.59" height="1.05" fill="#8f9fc0"/><rect x="1182.26" y="168.95" width="2.74" height="1.05" fill="#8f9fc0"/><rect x="1164.50" y="170.30" width="2.50" height="1.05" fill="#7f8fd0"/><rect x="1167.50" y="170.30" width="5.31" height="1.05" fill="#a0a0a0"/><rect x="1173.41" y="170.30" width="8.02" height="1.05" fill="#a0a0a0"/><rect x="1181.42" y="170.30" width="3.33" height="1.05" fill="#a0a0a0"/><rect x="1185.35" y="170.30" width="7.11" height="1.05" fill="#a0a0a0"/><rect x="1193.06" y="170.30" width="1.94" height="1.05" fill="#a0a0a0"/><rect x="1164.50" y="171.65" width="2.50" height="1.05" fill="#7f8fd0"/><rect x="1167.50" y="171.65" width="8.55" height="1.05" fill="#c98080"/><rect x="1177.25" y="171.65" width="2.75" height="1.05" fill="#c98080"/><rect x="1164.50" y="173.00" width="2.50" height="1.05" fill="#7f8fd0"/><rect x="1167.50" y="173.00" width="3.95" height="1.05" fill="#8f9fc0"/><rect x="1171.45" y="173.00" width="3.55" height="1.05" fill="#8f9fc0"/><rect x="1164.50" y="174.35" width="2.50" height="1.05" fill="#7f8fd0"/><rect x="1167.50" y="174.35" width="3.05" height="1.05" fill="#a0a0a0"/><rect x="1170.55" y="174.35" width="2.51" height="1.05" fill="#a0a0a0"/><rect x="1173.06" y="174.35" width="4.01" height="1.05" fill="#a0a0a0"/><rect x="1177.07" y="174.35" width="6.70" height="1.05" fill="#a0a0a0"/><rect x="1184.37" y="174.35" width="5.63" height="1.05" fill="#a0a0a0"/><rect x="1164.50" y="175.70" width="2.50" height="1.05" fill="#7f8fd0"/><rect x="1167.50" y="175.70" width="7.04" height="1.05" fill="#c98080"/><rect x="1174.54" y="175.70" width="3.15" height="1.05" fill="#c98080"/><rect x="1178.29" y="175.70" width="4.71" height="1.05" fill="#c98080"/><rect x="1164.50" y="177.05" width="2.50" height="1.05" fill="#7f8fd0"/><rect x="1167.50" y="177.05" width="3.95" height="1.05" fill="#8f9fc0"/><rect x="1172.65" y="177.05" width="2.51" height="1.05" fill="#8f9fc0"/><rect x="1164.50" y="177.50" width="4.46" height="1.05" fill="#b8a67a"/><rect x="1169.56" y="177.50" width="4.31" height="1.05" fill="#b8a67a"/><rect x="1174.47" y="177.50" width="1.53" height="1.05" fill="#b8a67a"/></svg>
<div class="a" style="left:1158px;top:70.6px;width:76px;height:0.8px;background:#e0e0e0;"></div>
<div class="a" style="left:1234px;top:60px;width:1px;height:365px;background:#ececec;"></div>
<div class="a" style="left:1235px;top:60px;width:8px;height:72.6px;background:#c4c4c4;"></div>
<div class="a" style="left:1235px;top:74.2px;width:8px;height:1.6px;background:#505050;"></div>
<div class="a" style="left:1237px;top:86.4px;width:3.5px;height:4.2px;background:#a0a0a0;"></div>
<div class="t" style="left:313.9px;top:433.80px;font-size:7.6px;height:7.6px;color:#717171;letter-spacing:-0.080px;">问题</div>
<div class="t" style="left:343.2px;top:433.80px;font-size:7.6px;height:7.6px;color:#717171;letter-spacing:-0.080px;">输出</div>
<div class="t" style="left:373.6px;top:433.80px;font-size:7.6px;height:7.6px;color:#717171;letter-spacing:-0.080px;">调试控制台</div>
<div class="t" style="left:423.6px;top:433.80px;font-size:7.6px;height:7.6px;color:#424242;letter-spacing:-0.080px;">终端</div>
<div class="t" style="left:454px;top:433.80px;font-size:7.6px;height:7.6px;color:#717171;letter-spacing:-0.080px;">端口</div>
<div class="a" style="left:423.6px;top:443.8px;width:16.3px;height:1.1px;background:#424242;"></div>
<div class="a" style="left:475px;top:431.2px;width:11.6px;height:11.6px;border-radius:6px;background:#c4c4c4"></div>
<div class="t" style="left:478.8px;top:434.30px;font-size:7.0px;height:7.0px;color:#333;letter-spacing:-0.080px;">1</div>
<div class="t" style="left:500.7px;top:433.95px;font-size:7.3px;height:7.3px;color:#717171;letter-spacing:-0.332px;">DOLPHINDB</div>
<svg style="left:1165px;top:432px" width="9" height="9" viewBox="0 0 9 9"><rect x="0.5" y="0.5" width="8" height="8" rx="0.8" stroke="#424242" stroke-width="0.9" fill="none"/><path d="M4.5 0.5V8.5" stroke="#424242" stroke-width="0.9"/></svg>
<svg style="left:1177px;top:435.5px" width="5" height="3" viewBox="0 0 5 3"><path d="M0.3 0.3 L2.5 2.5 L4.7 0.3" stroke="#666" stroke-width="0.7" fill="none"/></svg>
<div class="t" style="left:1189.5px;top:431.50px;font-size:9px;height:9px;color:#424242;letter-spacing:0.3px;font-weight:bold">···</div>
<svg style="left:1207.5px;top:433.5px" width="8" height="5" viewBox="0 0 8 5"><path d="M0.5 4.5 L4 1 L7.5 4.5" stroke="#424242" stroke-width="0.9" fill="none"/></svg>
<svg style="left:1225px;top:433px" width="6.5" height="6.5" viewBox="0 0 6 6"><path d="M0 0L6 6M6 0L0 6" stroke="#424242" stroke-width="0.9"/></svg>
<div class="t mono" style="left:314.4px;top:454.70px;font-size:8.15px;line-height:11.0px;color:#333;transform:scaleX(0.9285);transform-origin:0 0">cal time:  7.569595098495483 s</div>
<div class="t mono" style="left:314.4px;top:465.70px;font-size:8.15px;line-height:11.0px;color:#333;transform:scaleX(0.9285);transform-origin:0 0">100%|</div>
<div class="a" style="left:337px;top:465.5px;width:543.1px;height:10.4px;background:#333333;"></div>
<div class="t mono" style="left:880.6px;top:465.70px;font-size:8.15px;line-height:11.0px;color:#333;transform:scaleX(0.9285);transform-origin:0 0">| 16/16 [00:00&lt;00:00, 39062.20it/s]</div>
<div class="t mono" style="left:314.4px;top:476.70px;font-size:8.15px;line-height:11.0px;color:#333;transform:scaleX(0.9285);transform-origin:0 0">cal time:  7.614917516708374 s</div>
<div class="t mono" style="left:314.4px;top:487.70px;font-size:8.15px;line-height:11.0px;color:#333;transform:scaleX(0.9285);transform-origin:0 0">      SecurityID                TradeTime  inferprice</div>
<div class="t mono" style="left:314.4px;top:498.70px;font-size:8.15px;line-height:11.0px;color:#333;transform:scaleX(0.9285);transform-origin:0 0">0              1  2023.01.01T09:30:00.000    0.000000</div>
<div class="t mono" style="left:314.4px;top:509.70px;font-size:8.15px;line-height:11.0px;color:#333;transform:scaleX(0.9285);transform-origin:0 0">1              1  2023.01.01T09:30:03.000    0.041306</div>
<div class="t mono" style="left:314.4px;top:520.70px;font-size:8.15px;line-height:11.0px;color:#333;transform:scaleX(0.9285);transform-origin:0 0">2              1  2023.01.01T09:30:06.000    0.049355</div>
<div class="t mono" style="left:314.4px;top:531.70px;font-size:8.15px;line-height:11.0px;color:#333;transform:scaleX(0.9285);transform-origin:0 0">3              1  2023.01.01T09:30:09.000    0.042549</div>
<div class="t mono" style="left:314.4px;top:542.70px;font-size:8.15px;line-height:11.0px;color:#333;transform:scaleX(0.9285);transform-origin:0 0">4              1  2023.01.01T09:30:12.000    0.035764</div>
<div class="t mono" style="left:314.4px;top:553.70px;font-size:8.15px;line-height:11.0px;color:#333;transform:scaleX(0.9285);transform-origin:0 0">...          ...                      ...         ...</div>
<div class="t mono" style="left:314.4px;top:564.70px;font-size:8.15px;line-height:11.0px;color:#333;transform:scaleX(0.9285);transform-origin:0 0">4797         200  2023.01.01T14:59:48.000   -0.000510</div>
<div class="t mono" style="left:314.4px;top:575.70px;font-size:8.15px;line-height:11.0px;color:#333;transform:scaleX(0.9285);transform-origin:0 0">4798         200  2023.01.01T14:59:51.000   -0.000498</div>
<div class="t mono" style="left:314.4px;top:586.70px;font-size:8.15px;line-height:11.0px;color:#333;transform:scaleX(0.9285);transform-origin:0 0">4799         200  2023.01.01T14:59:54.000   -0.000473</div>
<div class="t mono" style="left:314.4px;top:597.70px;font-size:8.15px;line-height:11.0px;color:#333;transform:scaleX(0.9285);transform-origin:0 0">4800         200  2023.01.01T14:59:57.000   -0.000451</div>
<div class="t mono" style="left:314.4px;top:608.70px;font-size:8.15px;line-height:11.0px;color:#333;transform:scaleX(0.9285);transform-origin:0 0">4801         200  2023.01.01T15:00:00.000   -0.000412</div>
<div class="t mono" style="left:314.4px;top:619.70px;font-size:8.15px;line-height:11.0px;color:#333;transform:scaleX(0.9285);transform-origin:0 0"></div>
<div class="t mono" style="left:314.4px;top:630.70px;font-size:8.15px;line-height:11.0px;color:#333;transform:scaleX(0.9285);transform-origin:0 0">[960400 rows x 3 columns]</div>
<div class="t mono" style="left:314.4px;top:641.70px;font-size:8.15px;line-height:11.0px;color:#333;transform:scaleX(0.9285);transform-origin:0 0">(base) [wjchen@support2 python_plus_file_VS_dolphindb_on_factor_calc]$ </div>
<svg style="left:305.5px;top:643px" width="6" height="6" viewBox="0 0 6 6"><circle cx="3" cy="3" r="2.3" stroke="#a0a0a0" stroke-width="0.8" fill="none"/></svg>
<div class="a" style="left:1050.3px;top:455px;width:1.7px;height:3.5px;background:#e51400;"></div>
<div class="a" style="left:1045.8px;top:468.7px;width:1.8px;height:3.2px;background:#1a85d6;"></div>
<div class="a" style="left:1045.8px;top:475.1px;width:1.8px;height:3.2px;background:#1a85d6;"></div>
<div class="a" style="left:1045.8px;top:559.5px;width:1.5px;height:3px;background:#1a85d6;"></div>
<div class="a" style="left:1052px;top:447px;width:1px;height:207px;background:#e0e0e0;"></div>
<div class="a" style="left:1053px;top:461.4px;width:190px;height:14.6px;background:#e4e6f1;"></div>
<svg style="left:1059.5px;top:450.5px" width="9" height="9" viewBox="0 0 9 9"><rect x="0.5" y="0.5" width="8" height="8" rx="0.8" stroke="#424242" stroke-width="0.8" fill="none"/><path d="M2 2.8 L3.8 4.3 L2 5.8 M4.3 6.6 H7" stroke="#424242" stroke-width="0.8" fill="none"/></svg>
<div class="t" style="left:1072px;top:451.40px;font-size:8.4px;height:8.4px;color:#717171;letter-spacing:0.027px;">DolphinDB</div>
<svg style="left:1059.5px;top:464.5px" width="9" height="9" viewBox="0 0 9 9"><path d="M4.5 0.5 L8.3 2.5 V6.5 L4.5 8.5 L0.7 6.5 V2.5 Z" stroke="#9a9a9a" stroke-width="0.7" fill="none"/><path d="M3 4 L6.5 2.8 V6.5 L3 7.8 Z" fill="#333"/></svg>
<div class="t" style="left:1072px;top:465.40px;font-size:8.4px;height:8.4px;color:#5a5a5a;letter-spacing:-0.059px;">Python</div>
<div class="t" style="left:1102px;top:465px;font-size:7.6px;height:9px;color:#717171;width:137px;overflow:hidden;text-overflow:ellipsis;letter-spacing:-0.1px">python_plus_file_VS_dolphindb_on_factor_calc</div>
<div class="a" style="left:1046px;top:647px;width:1.2px;height:4px;background:#9a9a9a;"></div>
<svg style="left:7.7px;top:657px" width="7" height="8.5" viewBox="0 0 7 8.5"><path d="M0.5 2.4 L2.8 4.9 L0.5 7.6" stroke="#fff" stroke-width="1" fill="none"/><path d="M5.9 0.4 L3.6 2.4 L5.9 4.5" stroke="#fff" stroke-width="1" fill="none"/></svg>
<div class="t" style="left:17.8px;top:657.45px;font-size:8.3px;height:8.3px;color:#ffffff;letter-spacing:-0.559px;">SSH: 192.168.100.3</div>
<svg style="left:94px;top:656.4px" width="9" height="9" viewBox="0 0 9 9"><circle cx="4.5" cy="4.5" r="4" stroke="#fff" stroke-width="0.85" fill="none"/><path d="M2.5 2.5L6.5 6.5M6.5 2.5L2.5 6.5" stroke="#fff" stroke-width="0.9"/></svg>
<div class="t" style="left:104.9px;top:657.45px;font-size:8.3px;height:8.3px;color:#ffffff;letter-spacing:0.384px;">0</div>
<svg style="left:112px;top:656.3px" width="8.5" height="8.5" viewBox="0 0 9 9"><path d="M4.5 0.6 L8.5 8.3 H0.5 Z" stroke="#fff" stroke-width="0.85" fill="none" stroke-linejoin="round"/><path d="M4.5 3.3V5.7M4.5 6.5V7.3" stroke="#fff" stroke-width="0.85"/></svg>
<div class="t" style="left:122.3px;top:657.45px;font-size:8.3px;height:8.3px;color:#ffffff;letter-spacing:0.384px;">0</div>
<svg style="left:137.7px;top:656.5px" width="8.5" height="9" viewBox="0 0 9 9"><path d="M4.5 3.5 V8.5 M2.5 8.5 L4.5 3.5 L6.5 8.5 M1.5 1 C0.3 2.5 0.3 4.5 1.5 6 M7.5 1 C8.7 2.5 8.7 4.5 7.5 6 M3 2.3 C2.5 3 2.5 4 3 4.7 M6 2.3 C6.5 3 6.5 4 6 4.7" stroke="#fff" stroke-width="0.85" fill="none"/></svg>
<div class="t" style="left:148.6px;top:657.45px;font-size:8.3px;height:8.3px;color:#ffffff;letter-spacing:-0.816px;">1</div>
<div class="t" style="left:797.6px;top:657.80px;font-size:7.6px;height:7.6px;color:#ffffff;letter-spacing:0.112px;-webkit-text-stroke:0.15px #fff">行 6，列 16</div>
<div class="t" style="left:847.5px;top:657.80px;font-size:7.6px;height:7.6px;color:#ffffff;letter-spacing:0.190px;-webkit-text-stroke:0.15px #fff">空格: 4</div>
<div class="t" style="left:881.8px;top:657.45px;font-size:8.3px;height:8.3px;color:#ffffff;letter-spacing:-0.463px;-webkit-text-stroke:0.15px #fff">UTF-8</div>
<div class="t" style="left:912.9px;top:657.45px;font-size:8.3px;height:8.3px;color:#ffffff;letter-spacing:-1.193px;-webkit-text-stroke:0.15px #fff">LF</div>
<div class="t" style="left:942.5px;top:657.45px;font-size:8.3px;height:8.3px;color:#ffffff;letter-spacing:-0.307px;-webkit-text-stroke:0.15px #fff">Python</div>
<div class="t" style="left:975.2px;top:657.45px;font-size:8.3px;height:8.3px;color:#ffffff;letter-spacing:-0.336px;-webkit-text-stroke:0.15px #fff">3.10.10 (&#x27;base&#x27;: conda)</div>
<div class="t" style="left:1080.9px;top:657.80px;font-size:7.6px;height:7.6px;color:#ffffff;letter-spacing:0.160px;-webkit-text-stroke:0.15px #fff">小数位数: 实际</div>
<div class="t" style="left:1142px;top:657.80px;font-size:7.6px;height:7.6px;color:#ffffff;letter-spacing:0.567px;-webkit-text-stroke:0.15px #fff">空闲中</div>
<div class="t" style="left:1189px;top:657.45px;font-size:8.3px;height:8.3px;color:#ffffff;letter-spacing:-0.232px;-webkit-text-stroke:0.15px #fff">Prettier</div>
<svg style="left:930.8px;top:656.6px" width="8" height="9" viewBox="0 0 8 9"><path d="M2.5 0.5 C1.3 0.5 1.3 1.3 1.3 2.3 V3.5 C1.3 4 0.9 4.4 0.3 4.5 C0.9 4.6 1.3 5 1.3 5.5 V6.7 C1.3 7.7 1.3 8.5 2.5 8.5" stroke="#fff" stroke-width="0.85" fill="none"/><circle cx="5.6" cy="6.3" r="1.9" fill="#fff"/><path d="M5 1.5 C6 2.5 6 3.5 5.5 4.5" stroke="#fff" stroke-width="0.8" fill="none"/></svg>
<svg style="left:1060.5px;top:655.8px" width="11" height="10" viewBox="0 0 11 10"><path d="M1.2 5.2 C0.8 2.6 1.6 1 3.4 1 C4.6 1 5.3 1.6 5.5 2.6 C5.7 1.6 6.4 1 7.6 1 C9.4 1 10.2 2.6 9.8 5.2 C10.4 5.6 10.5 6.4 10.3 7 C9.3 9 7.5 9.6 5.5 9.6 C3.5 9.6 1.7 9 0.7 7 C0.5 6.4 0.6 5.6 1.2 5.2 Z" fill="#fff"/><ellipse cx="3.5" cy="3.6" rx="1.5" ry="1.4" fill="#007acc"/><ellipse cx="7.5" cy="3.6" rx="1.5" ry="1.4" fill="#007acc"/><rect x="3.6" y="6.2" width="0.9" height="1.7" fill="#007acc"/><rect x="6.5" y="6.2" width="0.9" height="1.7" fill="#007acc"/></svg>
<svg style="left:1177.8px;top:656.6px" width="8.6" height="8.6" viewBox="0 0 9 9"><circle cx="4.5" cy="4.5" r="3.9" stroke="#fff" stroke-width="0.9" fill="none"/><path d="M1.8 7.2 L7.2 1.8" stroke="#fff" stroke-width="0.9"/></svg>
<svg style="left:1224.6px;top:656.2px" width="8.4" height="9.5" viewBox="0 0 9 10"><path d="M1 7.5 C1.8 6.5 1.8 5.5 1.8 4.5 C1.8 2.5 3 1.3 4.5 1.3 C6 1.3 7.2 2.5 7.2 4.5 C7.2 5.5 7.2 6.5 8 7.5 Z M3.5 8.7 H5.5" stroke="#fff" stroke-width="0.9" fill="none" stroke-linejoin="round"/><circle cx="7" cy="2" r="1.7" fill="#fff"/></svg>
</body></html>
